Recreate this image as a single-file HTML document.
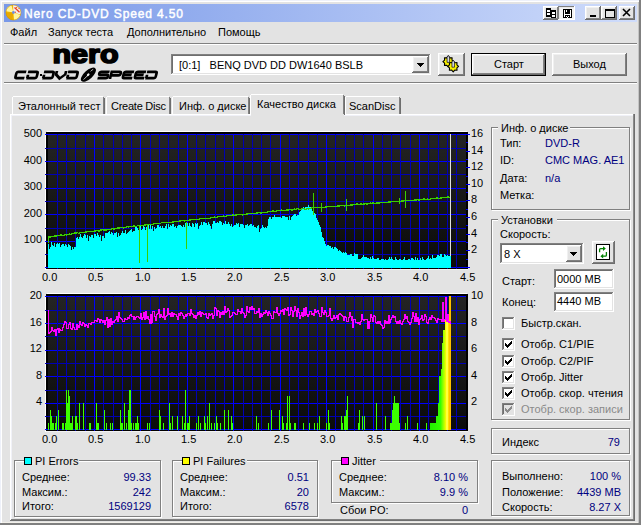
<!DOCTYPE html><html><head><meta charset="utf-8"><style>
*{margin:0;padding:0;box-sizing:border-box}
html,body{width:641px;height:525px;overflow:hidden;background:#e3e3e3;font-family:"Liberation Sans", sans-serif;font-size:11px;color:#000;position:relative}
.t{position:absolute;white-space:pre;line-height:13px}
.a{position:absolute}
</style></head><body><div class="a" style="left:0px;top:0px;width:641px;height:1px;background:#eef1fa;"></div><div class="a" style="left:0px;top:0px;width:1px;height:525px;background:#eef1fa;"></div><div class="a" style="left:1px;top:1px;width:638px;height:1px;background:#ffffff;"></div><div class="a" style="left:1px;top:1px;width:1px;height:522px;background:#ffffff;"></div><div class="a" style="left:0px;top:523px;width:641px;height:2px;background:#808080;"></div><div class="a" style="left:639px;top:0px;width:2px;height:525px;background:#808080;"></div><div class="a" style="left:2px;top:522px;width:637px;height:1px;background:#f2f0ea;"></div><div class="a" style="left:638px;top:2px;width:1px;height:521px;background:#c4c4c4;"></div><div class="a" style="left:4px;top:4px;width:633px;height:18px;background:linear-gradient(to right,#7898e8,#cfdcfb);"></div><div class="t" style="left:24px;top:8px;color:#fff;font-size:12px;font-weight:400;letter-spacing:0.87px;-webkit-text-stroke:0.45px #fff">Nero CD-DVD Speed 4.50</div><svg class="a" style="left:5px;top:4px" width="17" height="17" viewBox="0 0 17 17"><circle cx="8.4" cy="8.5" r="7.5" fill="#f2b800"/><path d="M8.4 8.5 L1.01 7.20 A7.5 7.5 0 0 1 6.46 1.26 Z" fill="#fff6a0"/><path d="M8.4 8.5 L15.45 11.07 A7.5 7.5 0 0 1 9.05 15.97 Z" fill="#fff6a0"/><path d="M8.4 8.5 L7.10 15.89 A7.5 7.5 0 0 1 0.90 8.50 Z" fill="#e8a800"/><path d="M8.4 8.5 L8.14 1.00 A7.5 7.5 0 0 1 15.64 10.44 Z" fill="#f4f0f0"/><path d="M9.5 3.5 L14.5 8.2" stroke="#e84020" stroke-width="1.3"/><circle cx="11.5" cy="3.5" r="0.8" fill="#f06030"/><circle cx="10.3" cy="8.3" r="0.8" fill="#f06030"/><circle cx="14" cy="4.5" r="0.7" fill="#f06030"/><circle cx="8.4" cy="8.5" r="1.4" fill="#7090e0"/><circle cx="8.4" cy="8.5" r="7.5" fill="none" stroke="#c89000" stroke-width="0.5"/></svg><div class="a" style="left:543px;top:6px;width:16px;height:14px;background:#6e6e6e;"></div><div class="a" style="left:543px;top:6px;width:15px;height:13px;background:#ffffff;"></div><div class="a" style="left:544px;top:7px;width:14px;height:12px;background:#808080;"></div><div class="a" style="left:544px;top:7px;width:13px;height:11px;background:#f0f0f0;"></div><div class="a" style="left:545px;top:8px;width:12px;height:10px;background:#e3e3e3;"></div><div class="a" style="left:558px;top:6px;width:17px;height:14px;background:#ffffff;"></div><div class="a" style="left:558px;top:6px;width:16px;height:13px;background:#808080;"></div><div class="a" style="left:559px;top:7px;width:15px;height:12px;background:#e8e8e8;"></div><div class="a" style="left:560px;top:8px;width:14px;height:11px;background:#f4f4f4;"></div><div class="a" style="left:585px;top:6px;width:16px;height:14px;background:#6e6e6e;"></div><div class="a" style="left:585px;top:6px;width:15px;height:13px;background:#ffffff;"></div><div class="a" style="left:586px;top:7px;width:14px;height:12px;background:#808080;"></div><div class="a" style="left:586px;top:7px;width:13px;height:11px;background:#f0f0f0;"></div><div class="a" style="left:587px;top:8px;width:12px;height:10px;background:#e3e3e3;"></div><div class="a" style="left:601px;top:6px;width:16px;height:14px;background:#6e6e6e;"></div><div class="a" style="left:601px;top:6px;width:15px;height:13px;background:#ffffff;"></div><div class="a" style="left:602px;top:7px;width:14px;height:12px;background:#808080;"></div><div class="a" style="left:602px;top:7px;width:13px;height:11px;background:#f0f0f0;"></div><div class="a" style="left:603px;top:8px;width:12px;height:10px;background:#e3e3e3;"></div><div class="a" style="left:619px;top:6px;width:16px;height:14px;background:#6e6e6e;"></div><div class="a" style="left:619px;top:6px;width:15px;height:13px;background:#ffffff;"></div><div class="a" style="left:620px;top:7px;width:14px;height:12px;background:#808080;"></div><div class="a" style="left:620px;top:7px;width:13px;height:11px;background:#f0f0f0;"></div><div class="a" style="left:621px;top:8px;width:12px;height:10px;background:#e3e3e3;"></div><svg class="a" style="left:543px;top:6px" width="92" height="14" shape-rendering="crispEdges">
<rect x="3" y="2" width="5" height="9" fill="#000"/>
<rect x="8" y="4" width="5" height="8" fill="#000"/>
<rect x="4" y="4" width="3" height="2" fill="#fff"/><rect x="4" y="7" width="3" height="2" fill="#fff"/>
<rect x="9" y="6" width="3" height="2" fill="#fff"/><rect x="9" y="9" width="3" height="2" fill="#fff"/>
<rect x="20" y="3" width="9" height="9" fill="#000"/>
<rect x="21" y="4" width="1" height="7" fill="#fff"/><rect x="27" y="4" width="1" height="7" fill="#fff"/>
<rect x="22" y="8" width="5" height="1" fill="#fff"/><rect x="23" y="4" width="1" height="2" fill="#fff"/>
<rect x="23" y="10" width="1" height="1" fill="#fff"/><rect x="25" y="10" width="1" height="1" fill="#fff"/><rect x="24" y="11" width="1" height="1" fill="#fff"/>
<rect x="47" y="9" width="6" height="2" fill="#000"/>
<rect x="62" y="3" width="9" height="8" fill="none" stroke="#000" stroke-width="1"/>
<rect x="62" y="2.5" width="9.5" height="2" fill="#000"/>
<path d="M80 3 L87 10 M87 3 L80 10" stroke="#000" stroke-width="1.6" shape-rendering="auto"/>
</svg><div class="t" style="left:10px;top:26px;color:#000;font-size:11px;font-weight:400;">Файл</div><div class="t" style="left:48px;top:26px;color:#000;font-size:11px;font-weight:400;">Запуск теста</div><div class="t" style="left:127px;top:26px;color:#000;font-size:11px;font-weight:400;">Дополнительно</div><div class="t" style="left:218px;top:26px;color:#000;font-size:11px;font-weight:400;">Помощь</div><div class="a" style="left:4px;top:43px;width:633px;height:1px;background:#808080;"></div><div class="a" style="left:4px;top:44px;width:633px;height:1px;background:#ffffff;"></div><div class="a" style="left:4px;top:82px;width:633px;height:1px;background:#808080;"></div><div class="a" style="left:4px;top:83px;width:633px;height:1px;background:#ffffff;"></div><svg class="a" style="left:0px;top:0px" width="170" height="84"><text transform="translate(52.5 63.3) scale(1 0.92)" x="0" y="0" font-family="Liberation Sans" font-weight="700" font-size="29" textLength="66" lengthAdjust="spacingAndGlyphs" stroke="#000" stroke-width="1.9" stroke-linejoin="round" fill="#000">nero</text><path transform="translate(16 70.7) skewX(-14)" d="M10.5 1.1 H2.6 Q1 1.1 1 2.7 V5.8 Q1 7.4 2.6 7.4 H10.2" fill="none" stroke="#000" stroke-width="2.7"/><path transform="translate(28 70.7) skewX(-14)" d="M0.3 1.1 H8.6 Q10.2 1.1 10.2 2.7 V5.8 Q10.2 7.4 8.6 7.4 H0.3 M1.1 4 V7.4" fill="none" stroke="#000" stroke-width="2.7"/><path transform="translate(44 70.7) skewX(-14)" d="M0.3 1.1 H8.6 Q10.2 1.1 10.2 2.7 V5.8 Q10.2 7.4 8.6 7.4 H0.3 M1.1 4 V7.4" fill="none" stroke="#000" stroke-width="2.7"/><path transform="translate(56 70.7) skewX(-14)" d="M1 0.2 V3.8 L5.6 7.8 L10.2 3.8 V0.2" fill="none" stroke="#000" stroke-width="2.7"/><path transform="translate(68 70.7) skewX(-14)" d="M0.3 1.1 H8.6 Q10.2 1.1 10.2 2.7 V5.8 Q10.2 7.4 8.6 7.4 H0.3 M1.1 4 V7.4" fill="none" stroke="#000" stroke-width="2.7"/><path transform="translate(99 70.7) skewX(-14)" d="M10.8 1.1 H2.6 Q1 1.1 1 2.6 Q1 4.25 2.6 4.25 H8.8 Q10.4 4.25 10.4 5.85 Q10.4 7.4 8.8 7.4 H0.4" fill="none" stroke="#000" stroke-width="2.7"/><path transform="translate(111 70.7) skewX(-14)" d="M1 8.4 V1.1 H8.8 Q10.4 1.1 10.4 2.6 V3 Q10.4 4.6 8.8 4.6 H1.6" fill="none" stroke="#000" stroke-width="2.7"/><path transform="translate(123.5 70.7) skewX(-14)" d="M10.8 1.1 H2.6 Q1 1.1 1 2.7 V5.8 Q1 7.4 2.6 7.4 H10.6 M1.5 4.25 H9.2" fill="none" stroke="#000" stroke-width="2.7"/><path transform="translate(135.5 70.7) skewX(-14)" d="M10.8 1.1 H2.6 Q1 1.1 1 2.7 V5.8 Q1 7.4 2.6 7.4 H10.6 M1.5 4.25 H9.2" fill="none" stroke="#000" stroke-width="2.7"/><path transform="translate(147 70.7) skewX(-14)" d="M0.3 1.1 H8.6 Q10.2 1.1 10.2 2.7 V5.8 Q10.2 7.4 8.6 7.4 H0.3 M1.1 4 V7.4" fill="none" stroke="#000" stroke-width="2.7"/><rect x="40" y="74" width="2" height="2" fill="#000"/><ellipse cx="88.4" cy="74.7" rx="4.3" ry="9.4" transform="rotate(48 88.4 74.7)" fill="#000"/><path d="M83.6 79.6 L87.2 76" stroke="#d8d8d8" stroke-width="0.9"/><path d="M90.6 71.4 Q91.8 69.8 93.2 69.4" fill="none" stroke="#c8c8c8" stroke-width="0.9"/><ellipse cx="88.2" cy="74.8" rx="1.6" ry="1.1" transform="rotate(-45 88.2 74.8)" fill="#f0f0f0"/></svg><div class="a" style="left:171px;top:54px;width:260px;height:21px;background:#ffffff;"></div><div class="a" style="left:171px;top:54px;width:259px;height:20px;background:#808080;"></div><div class="a" style="left:172px;top:55px;width:258px;height:19px;background:#e3e3e3;"></div><div class="a" style="left:172px;top:55px;width:257px;height:18px;background:#6e6e6e;"></div><div class="a" style="left:173px;top:56px;width:256px;height:17px;background:#fff;"></div><div class="t" style="left:179px;top:59px;color:#000;font-size:11px;font-weight:400;">[0:1]   BENQ DVD DD DW1640 BSLB</div><div class="a" style="left:412px;top:56px;width:17px;height:17px;background:#6e6e6e;"></div><div class="a" style="left:412px;top:56px;width:16px;height:16px;background:#ffffff;"></div><div class="a" style="left:413px;top:57px;width:15px;height:15px;background:#808080;"></div><div class="a" style="left:413px;top:57px;width:14px;height:14px;background:#f0f0f0;"></div><div class="a" style="left:414px;top:58px;width:13px;height:13px;background:#e3e3e3;"></div><svg class="a" style="left:412px;top:56px" width="17" height="17" shape-rendering="crispEdges"><path d="M5 7h7l-3.5 4z" fill="#000"/></svg><div class="a" style="left:438px;top:53px;width:27px;height:23px;background:#6e6e6e;"></div><div class="a" style="left:438px;top:53px;width:26px;height:22px;background:#ffffff;"></div><div class="a" style="left:439px;top:54px;width:25px;height:21px;background:#808080;"></div><div class="a" style="left:439px;top:54px;width:24px;height:20px;background:#f0f0f0;"></div><div class="a" style="left:440px;top:55px;width:23px;height:19px;background:#e3e3e3;"></div><svg class="a" style="left:438px;top:53px" width="27" height="23"><polygon points="15.70,8.60 14.00,10.13 14.12,12.42 11.83,12.30 10.30,14.00 8.77,12.30 6.48,12.42 6.60,10.13 4.90,8.60 6.60,7.07 6.48,4.78 8.77,4.90 10.30,3.20 11.83,4.90 14.12,4.78 14.00,7.07" fill="#f8f000" stroke="#000" stroke-width="1.1" stroke-linejoin="round"/><circle cx="10.3" cy="8.6" r="2.2" fill="#f8f000"/><polygon points="20.60,13.40 18.90,14.93 19.02,17.22 16.73,17.10 15.20,18.80 13.67,17.10 11.38,17.22 11.50,14.93 9.80,13.40 11.50,11.87 11.38,9.58 13.67,9.70 15.20,8.00 16.73,9.70 19.02,9.58 18.90,11.87" fill="#f8f000" stroke="#000" stroke-width="1.1" stroke-linejoin="round"/><circle cx="15.2" cy="13.4" r="2.2" fill="#f8f000"/><path d="M9.0 9.4 V4.0 L10.3 2.3999999999999995 L11.600000000000001 4.0 V9.4 Z" fill="#a8a8b8" stroke="#000" stroke-width="0.6"/><rect x="9.9" y="4.1" width="0.8" height="4.6" fill="#e8e8f0"/><path d="M13.899999999999999 14.200000000000001 V8.8 L15.2 7.2 L16.5 8.8 V14.200000000000001 Z" fill="#a8a8b8" stroke="#000" stroke-width="0.6"/><rect x="14.799999999999999" y="8.9" width="0.8" height="4.6" fill="#e8e8f0"/></svg><div class="a" style="left:471px;top:53px;width:75px;height:23px;background:#000;"></div><div class="a" style="left:472px;top:54px;width:73px;height:21px;background:#6e6e6e;"></div><div class="a" style="left:472px;top:54px;width:72px;height:20px;background:#ffffff;"></div><div class="a" style="left:473px;top:55px;width:71px;height:19px;background:#808080;"></div><div class="a" style="left:473px;top:55px;width:70px;height:18px;background:#f0f0f0;"></div><div class="a" style="left:474px;top:56px;width:69px;height:17px;background:#e3e3e3;"></div><div class="t" style="left:494px;top:58px;color:#000;font-size:11px;font-weight:400;">Старт</div><div class="a" style="left:552px;top:53px;width:75px;height:23px;background:#6e6e6e;"></div><div class="a" style="left:552px;top:53px;width:74px;height:22px;background:#ffffff;"></div><div class="a" style="left:553px;top:54px;width:73px;height:21px;background:#808080;"></div><div class="a" style="left:553px;top:54px;width:72px;height:20px;background:#f0f0f0;"></div><div class="a" style="left:554px;top:55px;width:71px;height:19px;background:#e3e3e3;"></div><div class="t" style="left:573px;top:58px;color:#000;font-size:11px;font-weight:400;">Выход</div><div class="a" style="left:10px;top:114px;width:625px;height:407px;border-left:1px solid #fff;border-top:1px solid #fff;"></div><div class="a" style="left:11px;top:115px;width:622px;height:1px;background:#f0f1f8;"></div><div class="a" style="left:11px;top:115px;width:1px;height:404px;background:#f0f1f8;"></div><div class="a" style="left:633px;top:114px;width:1px;height:406px;background:#8a8a8a;"></div><div class="a" style="left:634px;top:114px;width:1px;height:407px;background:#6e6e6e;"></div><div class="a" style="left:11px;top:519px;width:623px;height:1px;background:#808080;"></div><div class="a" style="left:10px;top:520px;width:625px;height:1px;background:#6e6e6e;"></div><div class="a" style="left:12px;top:97px;width:1px;height:17px;background:#fff;"></div><div class="a" style="left:13px;top:96px;width:90px;height:1px;background:#fff;"></div><div class="a" style="left:103px;top:97px;width:1px;height:17px;background:#808080;"></div><div class="a" style="left:104px;top:98px;width:1px;height:16px;background:#6e6e6e;"></div><div class="a" style="left:13px;top:97px;width:90px;height:17px;background:#e3e3e3;"></div><div class="t" style="left:18px;top:100px;color:#000;font-size:11px;font-weight:400;">Эталонный тест</div><div class="a" style="left:106px;top:97px;width:1px;height:17px;background:#fff;"></div><div class="a" style="left:107px;top:96px;width:62px;height:1px;background:#fff;"></div><div class="a" style="left:169px;top:97px;width:1px;height:17px;background:#808080;"></div><div class="a" style="left:170px;top:98px;width:1px;height:16px;background:#6e6e6e;"></div><div class="a" style="left:107px;top:97px;width:62px;height:17px;background:#e3e3e3;"></div><div class="t" style="left:111px;top:100px;color:#000;font-size:11px;font-weight:400;"><span style="letter-spacing:-0.25px">Create Disc</span></div><div class="a" style="left:172px;top:97px;width:1px;height:17px;background:#fff;"></div><div class="a" style="left:173px;top:96px;width:75px;height:1px;background:#fff;"></div><div class="a" style="left:248px;top:97px;width:1px;height:17px;background:#808080;"></div><div class="a" style="left:249px;top:98px;width:1px;height:16px;background:#6e6e6e;"></div><div class="a" style="left:173px;top:97px;width:75px;height:17px;background:#e3e3e3;"></div><div class="t" style="left:179px;top:100px;color:#000;font-size:11px;font-weight:400;">Инф. о диске</div><div class="a" style="left:345px;top:97px;width:1px;height:17px;background:#fff;"></div><div class="a" style="left:346px;top:96px;width:53px;height:1px;background:#fff;"></div><div class="a" style="left:399px;top:97px;width:1px;height:17px;background:#808080;"></div><div class="a" style="left:400px;top:98px;width:1px;height:16px;background:#6e6e6e;"></div><div class="a" style="left:346px;top:97px;width:53px;height:17px;background:#e3e3e3;"></div><div class="t" style="left:349px;top:100px;color:#000;font-size:11px;font-weight:400;">ScanDisc</div><div class="a" style="left:250px;top:95px;width:1px;height:20px;background:#fff;"></div><div class="a" style="left:251px;top:94px;width:92px;height:1px;background:#fff;"></div><div class="a" style="left:343px;top:95px;width:1px;height:20px;background:#808080;"></div><div class="a" style="left:344px;top:96px;width:1px;height:19px;background:#6e6e6e;"></div><div class="a" style="left:251px;top:95px;width:92px;height:20px;background:#e3e3e3;"></div><div class="a" style="left:251px;top:114px;width:93px;height:2px;background:#e3e3e3;"></div><div class="t" style="left:257px;top:98px;color:#000;font-size:11px;font-weight:400;">Качество диска</div><svg class="a" width="641" height="525" style="left:0;top:0" shape-rendering="crispEdges"><defs><linearGradient id="cg134" x1="0" y1="0" x2="0" y2="1"><stop offset="0" stop-color="#242424"/><stop offset="1" stop-color="#0a0a0a"/></linearGradient></defs><rect x="47" y="131" width="420" height="1" fill="#ffffff"/><rect x="45" y="135" width="1" height="135" fill="#ffffff"/><rect x="46" y="269" width="422" height="1" fill="#f2f2f2"/><rect x="46" y="132" width="422" height="137" fill="#000"/><rect x="48" y="134" width="418" height="134" fill="url(#cg134)"/><rect x="45" y="134" width="421" height="1" fill="#0000ff"/><rect x="45" y="148" width="421" height="1" fill="#0000b4"/><rect x="45" y="161" width="421" height="1" fill="#0000ff"/><rect x="45" y="174" width="421" height="1" fill="#0000b4"/><rect x="45" y="188" width="421" height="1" fill="#0000ff"/><rect x="45" y="201" width="421" height="1" fill="#0000b4"/><rect x="45" y="214" width="421" height="1" fill="#0000ff"/><rect x="45" y="228" width="421" height="1" fill="#0000b4"/><rect x="45" y="241" width="421" height="1" fill="#0000ff"/><rect x="45" y="254" width="421" height="1" fill="#0000b4"/><rect x="45" y="267" width="421" height="1" fill="#0000ff"/><rect x="57" y="134" width="1" height="135" fill="#0000b4"/><rect x="66" y="134" width="1" height="135" fill="#0000b4"/><rect x="75" y="134" width="1" height="135" fill="#0000b4"/><rect x="85" y="134" width="1" height="135" fill="#0000b4"/><rect x="94" y="134" width="1" height="135" fill="#0000ff"/><rect x="103" y="134" width="1" height="135" fill="#0000b4"/><rect x="113" y="134" width="1" height="135" fill="#0000b4"/><rect x="122" y="134" width="1" height="135" fill="#0000b4"/><rect x="131" y="134" width="1" height="135" fill="#0000b4"/><rect x="140" y="134" width="1" height="135" fill="#0000ff"/><rect x="150" y="134" width="1" height="135" fill="#0000b4"/><rect x="159" y="134" width="1" height="135" fill="#0000b4"/><rect x="168" y="134" width="1" height="135" fill="#0000b4"/><rect x="178" y="134" width="1" height="135" fill="#0000b4"/><rect x="187" y="134" width="1" height="135" fill="#0000ff"/><rect x="196" y="134" width="1" height="135" fill="#0000b4"/><rect x="205" y="134" width="1" height="135" fill="#0000b4"/><rect x="215" y="134" width="1" height="135" fill="#0000b4"/><rect x="224" y="134" width="1" height="135" fill="#0000b4"/><rect x="233" y="134" width="1" height="135" fill="#0000ff"/><rect x="243" y="134" width="1" height="135" fill="#0000b4"/><rect x="252" y="134" width="1" height="135" fill="#0000b4"/><rect x="261" y="134" width="1" height="135" fill="#0000b4"/><rect x="270" y="134" width="1" height="135" fill="#0000b4"/><rect x="280" y="134" width="1" height="135" fill="#0000ff"/><rect x="289" y="134" width="1" height="135" fill="#0000b4"/><rect x="298" y="134" width="1" height="135" fill="#0000b4"/><rect x="308" y="134" width="1" height="135" fill="#0000b4"/><rect x="317" y="134" width="1" height="135" fill="#0000b4"/><rect x="326" y="134" width="1" height="135" fill="#0000ff"/><rect x="335" y="134" width="1" height="135" fill="#0000b4"/><rect x="345" y="134" width="1" height="135" fill="#0000b4"/><rect x="354" y="134" width="1" height="135" fill="#0000b4"/><rect x="363" y="134" width="1" height="135" fill="#0000b4"/><rect x="373" y="134" width="1" height="135" fill="#0000ff"/><rect x="382" y="134" width="1" height="135" fill="#0000b4"/><rect x="391" y="134" width="1" height="135" fill="#0000b4"/><rect x="400" y="134" width="1" height="135" fill="#0000b4"/><rect x="410" y="134" width="1" height="135" fill="#0000b4"/><rect x="419" y="134" width="1" height="135" fill="#0000ff"/><rect x="428" y="134" width="1" height="135" fill="#0000b4"/><rect x="438" y="134" width="1" height="135" fill="#0000b4"/><rect x="447" y="134" width="1" height="135" fill="#0000b4"/><rect x="456" y="134" width="1" height="135" fill="#0000b4"/><rect x="450" y="134" width="1" height="134" fill="#e0e0e0"/><path d="M48 268 L48 244 L49 244 L49 249 L50 249 L50 247 L51 247 L51 242 L52 242 L52 245 L53 245 L53 246 L54 246 L54 243 L55 243 L55 247 L56 247 L56 244 L57 244 L57 243 L58 243 L58 244 L59 244 L59 243 L60 243 L60 247 L61 247 L61 245 L62 245 L62 244 L63 244 L63 244 L64 244 L64 246 L65 246 L65 244 L66 244 L66 245 L67 245 L67 247 L68 247 L68 244 L69 244 L69 245 L70 245 L70 246 L71 246 L71 250 L72 250 L72 247 L73 247 L73 249 L74 249 L74 247 L75 247 L75 247 L76 247 L76 238 L77 238 L77 237 L78 237 L78 239 L79 239 L79 237 L80 237 L80 234 L81 234 L81 237 L82 237 L82 238 L83 238 L83 236 L84 236 L84 234 L85 234 L85 235 L86 235 L86 238 L87 238 L87 235 L88 235 L88 241 L89 241 L89 236 L90 236 L90 237 L91 237 L91 235 L92 235 L92 235 L93 235 L93 238 L94 238 L94 234 L95 234 L95 234 L96 234 L96 236 L97 236 L97 233 L98 233 L98 235 L99 235 L99 237 L100 237 L100 235 L101 235 L101 241 L102 241 L102 236 L103 236 L103 236 L104 236 L104 238 L105 238 L105 233 L106 233 L106 233 L107 233 L107 233 L108 233 L108 232 L109 232 L109 231 L110 231 L110 234 L111 234 L111 232 L112 232 L112 233 L113 233 L113 235 L114 235 L114 233 L115 233 L115 233 L116 233 L116 232 L117 232 L117 237 L118 237 L118 233 L119 233 L119 236 L120 236 L120 235 L121 235 L121 233 L122 233 L122 231 L123 231 L123 233 L124 233 L124 233 L125 233 L125 230 L126 230 L126 234 L127 234 L127 233 L128 233 L128 232 L129 232 L129 231 L130 231 L130 230 L131 230 L131 229 L132 229 L132 232 L133 232 L133 231 L134 231 L134 231 L135 231 L135 227 L136 227 L136 226 L137 226 L137 228 L138 228 L138 230 L139 230 L139 228 L140 228 L140 226 L141 226 L141 230 L142 230 L142 229 L143 229 L143 226 L144 226 L144 227 L145 227 L145 230 L146 230 L146 227 L147 227 L147 228 L148 228 L148 225 L149 225 L149 229 L150 229 L150 225 L151 225 L151 229 L152 229 L152 226 L153 226 L153 231 L154 231 L154 227 L155 227 L155 229 L156 229 L156 228 L157 228 L157 225 L158 225 L158 225 L159 225 L159 227 L160 227 L160 226 L161 226 L161 228 L162 228 L162 226 L163 226 L163 228 L164 228 L164 228 L165 228 L165 226 L166 226 L166 224 L167 224 L167 229 L168 229 L168 224 L169 224 L169 227 L170 227 L170 225 L171 225 L171 226 L172 226 L172 224 L173 224 L173 224 L174 224 L174 227 L175 227 L175 226 L176 226 L176 228 L177 228 L177 226 L178 226 L178 225 L179 225 L179 225 L180 225 L180 225 L181 225 L181 226 L182 226 L182 227 L183 227 L183 225 L184 225 L184 227 L185 227 L185 223 L186 223 L186 223 L187 223 L187 223 L188 223 L188 226 L189 226 L189 223 L190 223 L190 226 L191 226 L191 227 L192 227 L192 223 L193 223 L193 224 L194 224 L194 227 L195 227 L195 223 L196 223 L196 224 L197 224 L197 223 L198 223 L198 229 L199 229 L199 226 L200 226 L200 225 L201 225 L201 222 L202 222 L202 225 L203 225 L203 222 L204 222 L204 222 L205 222 L205 223 L206 223 L206 223 L207 223 L207 225 L208 225 L208 222 L209 222 L209 224 L210 224 L210 226 L211 226 L211 229 L212 229 L212 224 L213 224 L213 221 L214 221 L214 221 L215 221 L215 223 L216 223 L216 223 L217 223 L217 222 L218 222 L218 223 L219 223 L219 221 L220 221 L220 221 L221 221 L221 222 L222 222 L222 225 L223 225 L223 223 L224 223 L224 224 L225 224 L225 221 L226 221 L226 224 L227 224 L227 224 L228 224 L228 222 L229 222 L229 224 L230 224 L230 226 L231 226 L231 224 L232 224 L232 227 L233 227 L233 226 L234 226 L234 225 L235 225 L235 225 L236 225 L236 223 L237 223 L237 224 L238 224 L238 223 L239 223 L239 227 L240 227 L240 224 L241 224 L241 224 L242 224 L242 224 L243 224 L243 225 L244 225 L244 228 L245 228 L245 225 L246 225 L246 225 L247 225 L247 224 L248 224 L248 226 L249 226 L249 225 L250 225 L250 224 L251 224 L251 224 L252 224 L252 226 L253 226 L253 225 L254 225 L254 227 L255 227 L255 227 L256 227 L256 228 L257 228 L257 226 L258 226 L258 225 L259 225 L259 232 L260 232 L260 229 L261 229 L261 228 L262 228 L262 225 L263 225 L263 227 L264 227 L264 228 L265 228 L265 227 L266 227 L266 228 L267 228 L267 226 L268 226 L268 219 L269 219 L269 217 L270 217 L270 217 L271 217 L271 219 L272 219 L272 217 L273 217 L273 217 L274 217 L274 215 L275 215 L275 217 L276 217 L276 217 L277 217 L277 217 L278 217 L278 217 L279 217 L279 217 L280 217 L280 217 L281 217 L281 218 L282 218 L282 216 L283 216 L283 216 L284 216 L284 216 L285 216 L285 217 L286 217 L286 217 L287 217 L287 217 L288 217 L288 220 L289 220 L289 216 L290 216 L290 220 L291 220 L291 217 L292 217 L292 216 L293 216 L293 215 L294 215 L294 214 L295 214 L295 214 L296 214 L296 216 L297 216 L297 215 L298 215 L298 215 L299 215 L299 212 L300 212 L300 211 L301 211 L301 210 L302 210 L302 208 L303 208 L303 207 L304 207 L304 210 L305 210 L305 207 L306 207 L306 207 L307 207 L307 207 L308 207 L308 205 L309 205 L309 207 L310 207 L310 207 L311 207 L311 208 L312 208 L312 211 L313 211 L313 213 L314 213 L314 213 L315 213 L315 214 L316 214 L316 218 L317 218 L317 220 L318 220 L318 222 L319 222 L319 225 L320 225 L320 227 L321 227 L321 232 L322 232 L322 237 L323 237 L323 238 L324 238 L324 241 L325 241 L325 244 L326 244 L326 246 L327 246 L327 245 L328 245 L328 245 L329 245 L329 246 L330 246 L330 246 L331 246 L331 248 L332 248 L332 247 L333 247 L333 249 L334 249 L334 247 L335 247 L335 247 L336 247 L336 248 L337 248 L337 249 L338 249 L338 251 L339 251 L339 250 L340 250 L340 251 L341 251 L341 252 L342 252 L342 253 L343 253 L343 252 L344 252 L344 253 L345 253 L345 252 L346 252 L346 253 L347 253 L347 255 L348 255 L348 255 L349 255 L349 255 L350 255 L350 254 L351 254 L351 254 L352 254 L352 256 L353 256 L353 256 L354 256 L354 253 L355 253 L355 254 L356 254 L356 254 L357 254 L357 254 L358 254 L358 259 L359 259 L359 259 L360 259 L360 259 L361 259 L361 258 L362 258 L362 257 L363 257 L363 255 L364 255 L364 257 L365 257 L365 257 L366 257 L366 257 L367 257 L367 258 L368 258 L368 258 L369 258 L369 259 L370 259 L370 257 L371 257 L371 259 L372 259 L372 256 L373 256 L373 258 L374 258 L374 259 L375 259 L375 259 L376 259 L376 259 L377 259 L377 258 L378 258 L378 258 L379 258 L379 260 L380 260 L380 260 L381 260 L381 259 L382 259 L382 259 L383 259 L383 259 L384 259 L384 260 L385 260 L385 259 L386 259 L386 260 L387 260 L387 260 L388 260 L388 259 L389 259 L389 257 L390 257 L390 259 L391 259 L391 257 L392 257 L392 259 L393 259 L393 260 L394 260 L394 260 L395 260 L395 257 L396 257 L396 259 L397 259 L397 260 L398 260 L398 260 L399 260 L399 259 L400 259 L400 259 L401 259 L401 260 L402 260 L402 260 L403 260 L403 259 L404 259 L404 257 L405 257 L405 260 L406 260 L406 260 L407 260 L407 260 L408 260 L408 259 L409 259 L409 259 L410 259 L410 260 L411 260 L411 258 L412 258 L412 258 L413 258 L413 259 L414 259 L414 260 L415 260 L415 257 L416 257 L416 260 L417 260 L417 258 L418 258 L418 260 L419 260 L419 260 L420 260 L420 258 L421 258 L421 260 L422 260 L422 257 L423 257 L423 259 L424 259 L424 260 L425 260 L425 260 L426 260 L426 259 L427 259 L427 258 L428 258 L428 256 L429 256 L429 259 L430 259 L430 258 L431 258 L431 259 L432 259 L432 255 L433 255 L433 258 L434 258 L434 258 L435 258 L435 258 L436 258 L436 257 L437 257 L437 255 L438 255 L438 255 L439 255 L439 256 L440 256 L440 254 L441 254 L441 254 L442 254 L442 257 L443 257 L443 257 L444 257 L444 254 L445 254 L445 255 L446 255 L446 256 L447 256 L447 255 L448 255 L448 256 L449 256 L449 256 L450 256 L450 256 L451 256 L451 268 Z" fill="#00ffff"/><path d="M48 237.3 L49 237.2 L50 237.0 L51 236.9 L52 236.7 L53 236.6 L54 236.4 L55 235.7 L56 236.1 L57 236.0 L58 235.2 L59 235.7 L60 235.5 L61 234.8 L62 235.2 L63 235.1 L64 235.5 L65 234.8 L66 234.6 L67 235.1 L68 234.3 L69 234.2 L70 234.0 L71 234.5 L72 233.7 L73 233.0 L74 233.5 L75 232.8 L76 233.2 L77 232.5 L78 233.0 L79 233.5 L80 232.8 L81 232.6 L82 232.5 L83 232.4 L84 232.3 L85 232.2 L86 232.0 L87 231.9 L88 231.8 L89 231.7 L90 231.6 L91 231.4 L92 231.3 L93 231.2 L94 231.1 L95 231.0 L96 230.8 L97 230.7 L98 230.6 L99 231.1 L100 231.0 L101 229.7 L102 230.1 L103 229.4 L104 230.5 L105 229.8 L106 230.3 L107 229.5 L108 229.4 L109 229.3 L110 229.2 L111 229.1 L112 228.9 L113 228.8 L114 229.3 L115 228.6 L116 228.5 L117 228.3 L118 227.6 L119 228.1 L120 228.0 L121 227.3 L122 227.7 L123 227.6 L124 228.1 L125 227.4 L126 227.3 L127 226.5 L128 227.0 L129 226.9 L130 226.8 L131 226.7 L132 226.5 L133 226.4 L134 225.7 L135 226.8 L136 226.7 L137 225.9 L138 225.8 L139 225.7 L140 225.0 L141 226.1 L142 225.3 L143 225.2 L144 225.1 L145 225.0 L146 224.9 L147 224.8 L148 224.6 L149 224.5 L150 224.4 L151 224.3 L152 224.8 L153 224.0 L154 223.9 L155 223.8 L156 223.7 L157 223.6 L158 223.4 L159 223.3 L160 223.2 L161 223.1 L162 222.4 L163 222.8 L164 222.7 L165 222.6 L166 222.5 L167 223.0 L168 222.3 L169 222.2 L170 222.1 L171 222.6 L172 221.9 L173 222.4 L174 221.7 L175 221.6 L176 221.5 L177 221.3 L178 221.2 L179 221.1 L180 221.0 L181 220.9 L182 220.8 L183 220.7 L184 220.6 L185 221.1 L186 220.4 L187 220.3 L188 220.2 L189 220.1 L190 220.0 L191 219.9 L192 219.8 L193 219.7 L194 219.6 L195 219.5 L196 219.4 L197 219.3 L198 219.2 L199 219.1 L200 218.9 L201 218.8 L202 218.1 L203 218.6 L204 218.5 L205 218.4 L206 218.3 L207 218.2 L208 218.1 L209 218.6 L210 218.5 L211 217.8 L212 217.1 L213 217.6 L214 216.9 L215 217.4 L216 217.3 L217 217.2 L218 216.5 L219 217.0 L220 216.3 L221 216.8 L222 216.7 L223 215.9 L224 216.4 L225 216.3 L226 216.2 L227 215.5 L228 215.4 L229 215.9 L230 215.8 L231 215.7 L232 215.0 L233 214.9 L234 215.4 L235 215.3 L236 214.6 L237 215.1 L238 214.4 L239 214.9 L240 214.8 L241 214.1 L242 214.6 L243 215.1 L244 214.4 L245 214.3 L246 214.1 L247 214.0 L248 213.9 L249 213.2 L250 213.7 L251 213.6 L252 213.5 L253 213.4 L254 213.3 L255 213.2 L256 213.1 L257 213.0 L258 212.9 L259 212.8 L260 212.1 L261 213.2 L262 212.5 L263 212.4 L264 212.3 L265 212.2 L266 212.7 L267 212.0 L268 211.9 L269 211.1 L270 211.6 L271 211.5 L272 211.4 L273 210.7 L274 211.2 L275 211.7 L276 211.0 L277 210.9 L278 210.8 L279 210.1 L280 210.6 L281 209.9 L282 210.4 L283 210.4 L284 210.3 L285 210.2 L286 210.1 L287 210.0 L288 210.0 L289 209.9 L290 209.8 L291 209.1 L292 210.3 L293 209.6 L294 208.9 L295 209.4 L296 209.3 L297 208.7 L298 208.6 L299 209.1 L300 209.6 L301 209.5 L302 208.9 L303 208.8 L304 208.7 L305 209.2 L306 209.2 L307 208.5 L308 209.0 L309 208.9 L310 208.2 L311 208.8 L312 207.5 L313 208.0 L314 207.9 L315 207.8 L316 207.8 L317 207.1 L318 207.6 L319 207.5 L320 208.0 L321 207.4 L322 207.3 L323 207.2 L324 207.1 L325 207.1 L326 207.0 L327 206.9 L328 206.2 L329 206.7 L330 206.7 L331 206.6 L332 206.5 L333 206.4 L334 206.3 L335 206.9 L336 206.2 L337 206.1 L338 206.0 L339 206.0 L340 205.9 L341 205.8 L342 205.7 L343 205.6 L344 205.6 L345 206.1 L346 205.4 L347 205.3 L348 205.8 L349 205.2 L350 205.1 L351 205.0 L352 204.9 L353 204.9 L354 204.8 L355 204.7 L356 204.6 L357 203.9 L358 204.5 L359 204.4 L360 204.3 L361 203.6 L362 204.1 L363 204.1 L364 204.0 L365 203.9 L366 203.8 L367 204.4 L368 203.7 L369 203.6 L370 202.9 L371 203.4 L372 203.4 L373 202.7 L374 203.2 L375 203.1 L376 203.1 L377 203.0 L378 202.9 L379 203.4 L380 202.7 L381 202.7 L382 202.6 L383 202.5 L384 202.4 L385 202.4 L386 202.3 L387 202.2 L388 202.1 L389 202.0 L390 202.0 L391 201.9 L392 201.2 L393 201.1 L394 201.7 L395 201.6 L396 201.5 L397 202.0 L398 201.3 L399 201.3 L400 201.2 L401 201.1 L402 201.0 L403 201.0 L404 200.9 L405 200.8 L406 200.7 L407 200.6 L408 200.0 L409 200.5 L410 200.4 L411 200.3 L412 200.3 L413 200.8 L414 200.1 L415 200.0 L416 199.9 L417 199.9 L418 199.8 L419 200.3 L420 199.6 L421 199.6 L422 199.5 L423 199.4 L424 198.7 L425 199.2 L426 199.2 L427 199.1 L428 199.0 L429 199.5 L430 199.5 L431 198.8 L432 198.7 L433 198.6 L434 198.5 L435 198.5 L436 198.4 L437 197.7 L438 198.2 L439 198.2 L440 198.1 L441 198.0 L442 197.9 L443 197.8 L444 197.8 L445 197.7 L446 197.0 L447 197.5 L448 196.9 L449 197.4 L450 197.3" fill="none" stroke="#3ad000" stroke-width="1.2"/><rect x="48" y="236" width="1" height="7" fill="#3ad000"/><rect x="139" y="226" width="1" height="37" fill="#3ad000"/><rect x="147" y="225" width="1" height="37" fill="#3ad000"/><rect x="186" y="222" width="1" height="27" fill="#3ad000"/><rect x="313" y="193" width="1" height="22" fill="#3ad000"/><rect x="346" y="199" width="1" height="12" fill="#3ad000"/><rect x="405" y="191" width="1" height="17" fill="#3ad000"/><rect x="399" y="198" width="1" height="6" fill="#3ad000"/><rect x="321" y="203" width="1" height="9" fill="#3ad000"/><rect x="466" y="134" width="4" height="1" fill="#0000ff"/><rect x="466" y="142" width="2" height="1" fill="#0000ff"/><rect x="466" y="151" width="4" height="1" fill="#0000ff"/><rect x="466" y="159" width="2" height="1" fill="#0000ff"/><rect x="466" y="167" width="4" height="1" fill="#0000ff"/><rect x="466" y="176" width="2" height="1" fill="#0000ff"/><rect x="466" y="184" width="4" height="1" fill="#0000ff"/><rect x="466" y="192" width="2" height="1" fill="#0000ff"/><rect x="466" y="200" width="4" height="1" fill="#0000ff"/><rect x="466" y="209" width="2" height="1" fill="#0000ff"/><rect x="466" y="217" width="4" height="1" fill="#0000ff"/><rect x="466" y="225" width="2" height="1" fill="#0000ff"/><rect x="466" y="234" width="4" height="1" fill="#0000ff"/><rect x="466" y="242" width="2" height="1" fill="#0000ff"/><rect x="466" y="250" width="4" height="1" fill="#0000ff"/><rect x="466" y="259" width="2" height="1" fill="#0000ff"/><rect x="466" y="267" width="4" height="1" fill="#0000ff"/><defs><linearGradient id="cg296" x1="0" y1="0" x2="0" y2="1"><stop offset="0" stop-color="#242424"/><stop offset="1" stop-color="#0a0a0a"/></linearGradient></defs><rect x="47" y="293" width="420" height="1" fill="#ffffff"/><rect x="45" y="297" width="1" height="135" fill="#ffffff"/><rect x="46" y="431" width="422" height="1" fill="#f2f2f2"/><rect x="46" y="294" width="422" height="137" fill="#000"/><rect x="48" y="296" width="418" height="134" fill="url(#cg296)"/><rect x="45" y="296" width="421" height="1" fill="#0000ff"/><rect x="45" y="310" width="421" height="1" fill="#0000b4"/><rect x="45" y="323" width="421" height="1" fill="#0000ff"/><rect x="45" y="336" width="421" height="1" fill="#0000b4"/><rect x="45" y="350" width="421" height="1" fill="#0000ff"/><rect x="45" y="363" width="421" height="1" fill="#0000b4"/><rect x="45" y="376" width="421" height="1" fill="#0000ff"/><rect x="45" y="390" width="421" height="1" fill="#0000b4"/><rect x="45" y="403" width="421" height="1" fill="#0000ff"/><rect x="45" y="416" width="421" height="1" fill="#0000b4"/><rect x="45" y="429" width="421" height="1" fill="#0000ff"/><rect x="57" y="296" width="1" height="135" fill="#0000b4"/><rect x="66" y="296" width="1" height="135" fill="#0000b4"/><rect x="75" y="296" width="1" height="135" fill="#0000b4"/><rect x="85" y="296" width="1" height="135" fill="#0000b4"/><rect x="94" y="296" width="1" height="135" fill="#0000ff"/><rect x="103" y="296" width="1" height="135" fill="#0000b4"/><rect x="113" y="296" width="1" height="135" fill="#0000b4"/><rect x="122" y="296" width="1" height="135" fill="#0000b4"/><rect x="131" y="296" width="1" height="135" fill="#0000b4"/><rect x="140" y="296" width="1" height="135" fill="#0000ff"/><rect x="150" y="296" width="1" height="135" fill="#0000b4"/><rect x="159" y="296" width="1" height="135" fill="#0000b4"/><rect x="168" y="296" width="1" height="135" fill="#0000b4"/><rect x="178" y="296" width="1" height="135" fill="#0000b4"/><rect x="187" y="296" width="1" height="135" fill="#0000ff"/><rect x="196" y="296" width="1" height="135" fill="#0000b4"/><rect x="205" y="296" width="1" height="135" fill="#0000b4"/><rect x="215" y="296" width="1" height="135" fill="#0000b4"/><rect x="224" y="296" width="1" height="135" fill="#0000b4"/><rect x="233" y="296" width="1" height="135" fill="#0000ff"/><rect x="243" y="296" width="1" height="135" fill="#0000b4"/><rect x="252" y="296" width="1" height="135" fill="#0000b4"/><rect x="261" y="296" width="1" height="135" fill="#0000b4"/><rect x="270" y="296" width="1" height="135" fill="#0000b4"/><rect x="280" y="296" width="1" height="135" fill="#0000ff"/><rect x="289" y="296" width="1" height="135" fill="#0000b4"/><rect x="298" y="296" width="1" height="135" fill="#0000b4"/><rect x="308" y="296" width="1" height="135" fill="#0000b4"/><rect x="317" y="296" width="1" height="135" fill="#0000b4"/><rect x="326" y="296" width="1" height="135" fill="#0000ff"/><rect x="335" y="296" width="1" height="135" fill="#0000b4"/><rect x="345" y="296" width="1" height="135" fill="#0000b4"/><rect x="354" y="296" width="1" height="135" fill="#0000b4"/><rect x="363" y="296" width="1" height="135" fill="#0000b4"/><rect x="373" y="296" width="1" height="135" fill="#0000ff"/><rect x="382" y="296" width="1" height="135" fill="#0000b4"/><rect x="391" y="296" width="1" height="135" fill="#0000b4"/><rect x="400" y="296" width="1" height="135" fill="#0000b4"/><rect x="410" y="296" width="1" height="135" fill="#0000b4"/><rect x="419" y="296" width="1" height="135" fill="#0000ff"/><rect x="428" y="296" width="1" height="135" fill="#0000b4"/><rect x="438" y="296" width="1" height="135" fill="#0000b4"/><rect x="447" y="296" width="1" height="135" fill="#0000b4"/><rect x="456" y="296" width="1" height="135" fill="#0000b4"/><rect x="48" y="423" width="1" height="7" fill="#3cff00"/><rect x="50" y="410" width="1" height="20" fill="#3cff00"/><rect x="51" y="416" width="1" height="14" fill="#3cff00"/><rect x="52" y="423" width="1" height="7" fill="#3cff00"/><rect x="53" y="423" width="1" height="7" fill="#3cff00"/><rect x="55" y="423" width="1" height="7" fill="#3cff00"/><rect x="56" y="416" width="1" height="14" fill="#3cff00"/><rect x="58" y="410" width="1" height="20" fill="#3cff00"/><rect x="62" y="423" width="1" height="7" fill="#3cff00"/><rect x="63" y="423" width="1" height="7" fill="#3cff00"/><rect x="65" y="423" width="1" height="7" fill="#3cff00"/><rect x="66" y="390" width="1" height="40" fill="#3cff00"/><rect x="67" y="403" width="1" height="27" fill="#3cff00"/><rect x="68" y="390" width="1" height="40" fill="#3cff00"/><rect x="69" y="396" width="1" height="34" fill="#3cff00"/><rect x="70" y="423" width="1" height="7" fill="#3cff00"/><rect x="71" y="423" width="1" height="7" fill="#3cff00"/><rect x="72" y="416" width="1" height="14" fill="#3cff00"/><rect x="75" y="416" width="1" height="14" fill="#3cff00"/><rect x="76" y="416" width="1" height="14" fill="#3cff00"/><rect x="77" y="423" width="1" height="7" fill="#3cff00"/><rect x="79" y="403" width="1" height="27" fill="#3cff00"/><rect x="83" y="403" width="1" height="27" fill="#3cff00"/><rect x="89" y="423" width="1" height="7" fill="#3cff00"/><rect x="90" y="423" width="1" height="7" fill="#3cff00"/><rect x="96" y="403" width="1" height="27" fill="#3cff00"/><rect x="97" y="423" width="1" height="7" fill="#3cff00"/><rect x="98" y="423" width="1" height="7" fill="#3cff00"/><rect x="104" y="410" width="1" height="20" fill="#3cff00"/><rect x="106" y="423" width="1" height="7" fill="#3cff00"/><rect x="110" y="423" width="1" height="7" fill="#3cff00"/><rect x="112" y="423" width="1" height="7" fill="#3cff00"/><rect x="120" y="410" width="1" height="20" fill="#3cff00"/><rect x="121" y="423" width="1" height="7" fill="#3cff00"/><rect x="122" y="423" width="1" height="7" fill="#3cff00"/><rect x="124" y="403" width="1" height="27" fill="#3cff00"/><rect x="126" y="423" width="1" height="7" fill="#3cff00"/><rect x="128" y="410" width="1" height="20" fill="#3cff00"/><rect x="129" y="390" width="1" height="40" fill="#3cff00"/><rect x="130" y="390" width="1" height="40" fill="#3cff00"/><rect x="131" y="423" width="1" height="7" fill="#3cff00"/><rect x="133" y="423" width="1" height="7" fill="#3cff00"/><rect x="135" y="423" width="1" height="7" fill="#3cff00"/><rect x="136" y="423" width="1" height="7" fill="#3cff00"/><rect x="137" y="416" width="1" height="14" fill="#3cff00"/><rect x="138" y="423" width="1" height="7" fill="#3cff00"/><rect x="147" y="423" width="1" height="7" fill="#3cff00"/><rect x="149" y="423" width="1" height="7" fill="#3cff00"/><rect x="159" y="410" width="1" height="20" fill="#3cff00"/><rect x="160" y="416" width="1" height="14" fill="#3cff00"/><rect x="163" y="423" width="1" height="7" fill="#3cff00"/><rect x="169" y="403" width="1" height="27" fill="#3cff00"/><rect x="170" y="423" width="1" height="7" fill="#3cff00"/><rect x="172" y="416" width="1" height="14" fill="#3cff00"/><rect x="177" y="416" width="1" height="14" fill="#3cff00"/><rect x="182" y="416" width="1" height="14" fill="#3cff00"/><rect x="184" y="423" width="1" height="7" fill="#3cff00"/><rect x="185" y="390" width="1" height="40" fill="#3cff00"/><rect x="187" y="423" width="1" height="7" fill="#3cff00"/><rect x="188" y="423" width="1" height="7" fill="#3cff00"/><rect x="189" y="416" width="1" height="14" fill="#3cff00"/><rect x="196" y="423" width="1" height="7" fill="#3cff00"/><rect x="198" y="416" width="1" height="14" fill="#3cff00"/><rect x="200" y="423" width="1" height="7" fill="#3cff00"/><rect x="204" y="416" width="1" height="14" fill="#3cff00"/><rect x="205" y="423" width="1" height="7" fill="#3cff00"/><rect x="207" y="416" width="1" height="14" fill="#3cff00"/><rect x="209" y="403" width="1" height="27" fill="#3cff00"/><rect x="211" y="423" width="1" height="7" fill="#3cff00"/><rect x="214" y="423" width="1" height="7" fill="#3cff00"/><rect x="216" y="416" width="1" height="14" fill="#3cff00"/><rect x="217" y="423" width="1" height="7" fill="#3cff00"/><rect x="220" y="423" width="1" height="7" fill="#3cff00"/><rect x="224" y="410" width="1" height="20" fill="#3cff00"/><rect x="228" y="410" width="1" height="20" fill="#3cff00"/><rect x="231" y="416" width="1" height="14" fill="#3cff00"/><rect x="232" y="423" width="1" height="7" fill="#3cff00"/><rect x="256" y="416" width="1" height="14" fill="#3cff00"/><rect x="258" y="423" width="1" height="7" fill="#3cff00"/><rect x="268" y="423" width="1" height="7" fill="#3cff00"/><rect x="271" y="410" width="1" height="20" fill="#3cff00"/><rect x="279" y="410" width="1" height="20" fill="#3cff00"/><rect x="282" y="416" width="1" height="14" fill="#3cff00"/><rect x="283" y="423" width="1" height="7" fill="#3cff00"/><rect x="286" y="423" width="1" height="7" fill="#3cff00"/><rect x="287" y="396" width="1" height="34" fill="#3cff00"/><rect x="289" y="396" width="1" height="34" fill="#3cff00"/><rect x="290" y="423" width="1" height="7" fill="#3cff00"/><rect x="294" y="423" width="1" height="7" fill="#3cff00"/><rect x="295" y="423" width="1" height="7" fill="#3cff00"/><rect x="303" y="423" width="1" height="7" fill="#3cff00"/><rect x="309" y="423" width="1" height="7" fill="#3cff00"/><rect x="314" y="423" width="1" height="7" fill="#3cff00"/><rect x="317" y="423" width="1" height="7" fill="#3cff00"/><rect x="319" y="416" width="1" height="14" fill="#3cff00"/><rect x="326" y="423" width="1" height="7" fill="#3cff00"/><rect x="328" y="410" width="1" height="20" fill="#3cff00"/><rect x="329" y="423" width="1" height="7" fill="#3cff00"/><rect x="341" y="416" width="1" height="14" fill="#3cff00"/><rect x="342" y="423" width="1" height="7" fill="#3cff00"/><rect x="344" y="416" width="1" height="14" fill="#3cff00"/><rect x="345" y="416" width="1" height="14" fill="#3cff00"/><rect x="346" y="410" width="1" height="20" fill="#3cff00"/><rect x="347" y="396" width="1" height="34" fill="#3cff00"/><rect x="358" y="423" width="1" height="7" fill="#3cff00"/><rect x="359" y="410" width="1" height="20" fill="#3cff00"/><rect x="362" y="416" width="1" height="14" fill="#3cff00"/><rect x="364" y="416" width="1" height="14" fill="#3cff00"/><rect x="376" y="403" width="1" height="27" fill="#3cff00"/><rect x="385" y="416" width="1" height="14" fill="#3cff00"/><rect x="390" y="423" width="1" height="7" fill="#3cff00"/><rect x="391" y="423" width="1" height="7" fill="#3cff00"/><rect x="392" y="410" width="1" height="20" fill="#3cff00"/><rect x="393" y="403" width="1" height="27" fill="#3cff00"/><rect x="394" y="396" width="1" height="34" fill="#3cff00"/><rect x="395" y="403" width="1" height="27" fill="#3cff00"/><rect x="396" y="403" width="1" height="27" fill="#3cff00"/><rect x="397" y="403" width="1" height="27" fill="#3cff00"/><rect x="398" y="403" width="1" height="27" fill="#3cff00"/><rect x="399" y="423" width="1" height="7" fill="#3cff00"/><rect x="405" y="423" width="1" height="7" fill="#3cff00"/><rect x="407" y="416" width="1" height="14" fill="#3cff00"/><rect x="417" y="423" width="1" height="7" fill="#3cff00"/><rect x="426" y="423" width="1" height="7" fill="#3cff00"/><defs><linearGradient id="blob" x1="430" y1="0" x2="451" y2="0" gradientUnits="userSpaceOnUse"><stop offset="0" stop-color="#22ee00"/><stop offset="0.5" stop-color="#33ff00"/><stop offset="0.62" stop-color="#90ff00"/><stop offset="0.72" stop-color="#d8ff00"/><stop offset="0.76" stop-color="#ffff00"/><stop offset="0.81" stop-color="#ffff70"/><stop offset="0.86" stop-color="#ffff00"/><stop offset="0.9" stop-color="#ffc000"/><stop offset="0.97" stop-color="#ffb800"/><stop offset="1" stop-color="#ffe000"/></linearGradient></defs><path d="M430 430 L430 423 L436 423 L436 416 L438 416 L438 403 L439 403 L439 376 L441 376 L441 369 L442 369 L442 343 L443 343 L443 330 L445 330 L445 317 L449 317 L449 296 L451 296 L451 430 Z" fill="url(#blob)"/><rect x="48" y="310" width="1" height="24" fill="#ff00ff"/><rect x="49" y="332" width="1" height="2" fill="#ff00ff"/><rect x="50" y="331" width="1" height="2" fill="#ff00ff"/><rect x="51" y="327" width="1" height="5" fill="#ff00ff"/><rect x="52" y="327" width="1" height="4" fill="#ff00ff"/><rect x="53" y="330" width="1" height="2" fill="#ff00ff"/><rect x="54" y="329" width="1" height="3" fill="#ff00ff"/><rect x="55" y="329" width="1" height="7" fill="#ff00ff"/><rect x="56" y="329" width="1" height="7" fill="#ff00ff"/><rect x="57" y="328" width="1" height="2" fill="#ff00ff"/><rect x="58" y="328" width="2" height="5" fill="#ff00ff"/><rect x="59" y="329" width="1" height="4" fill="#ff00ff"/><rect x="60" y="329" width="1" height="2" fill="#ff00ff"/><rect x="61" y="330" width="1" height="1" fill="#ff00ff"/><rect x="62" y="327" width="1" height="4" fill="#ff00ff"/><rect x="63" y="324" width="1" height="4" fill="#ff00ff"/><rect x="64" y="321" width="1" height="4" fill="#ff00ff"/><rect x="65" y="321" width="1" height="2" fill="#ff00ff"/><rect x="66" y="322" width="1" height="7" fill="#ff00ff"/><rect x="67" y="328" width="1" height="1" fill="#ff00ff"/><rect x="68" y="324" width="1" height="5" fill="#ff00ff"/><rect x="69" y="322" width="1" height="3" fill="#ff00ff"/><rect x="70" y="322" width="1" height="7" fill="#ff00ff"/><rect x="71" y="328" width="1" height="2" fill="#ff00ff"/><rect x="72" y="323" width="1" height="7" fill="#ff00ff"/><rect x="73" y="323" width="1" height="5" fill="#ff00ff"/><rect x="74" y="327" width="1" height="3" fill="#ff00ff"/><rect x="75" y="329" width="1" height="1" fill="#ff00ff"/><rect x="76" y="324" width="2" height="6" fill="#ff00ff"/><rect x="77" y="324" width="1" height="2" fill="#ff00ff"/><rect x="78" y="325" width="1" height="3" fill="#ff00ff"/><rect x="79" y="321" width="1" height="7" fill="#ff00ff"/><rect x="80" y="321" width="1" height="4" fill="#ff00ff"/><rect x="81" y="324" width="1" height="2" fill="#ff00ff"/><rect x="82" y="322" width="1" height="4" fill="#ff00ff"/><rect x="83" y="322" width="1" height="2" fill="#ff00ff"/><rect x="84" y="323" width="1" height="4" fill="#ff00ff"/><rect x="85" y="324" width="1" height="3" fill="#ff00ff"/><rect x="86" y="324" width="1" height="2" fill="#ff00ff"/><rect x="87" y="325" width="1" height="3" fill="#ff00ff"/><rect x="88" y="323" width="1" height="5" fill="#ff00ff"/><rect x="89" y="323" width="1" height="1" fill="#ff00ff"/><rect x="90" y="323" width="1" height="2" fill="#ff00ff"/><rect x="91" y="322" width="1" height="3" fill="#ff00ff"/><rect x="92" y="322" width="1" height="1" fill="#ff00ff"/><rect x="93" y="322" width="1" height="1" fill="#ff00ff"/><rect x="94" y="320" width="1" height="3" fill="#ff00ff"/><rect x="95" y="320" width="1" height="1" fill="#ff00ff"/><rect x="96" y="320" width="1" height="2" fill="#ff00ff"/><rect x="97" y="318" width="1" height="4" fill="#ff00ff"/><rect x="98" y="318" width="1" height="2" fill="#ff00ff"/><rect x="99" y="319" width="1" height="4" fill="#ff00ff"/><rect x="100" y="319" width="1" height="4" fill="#ff00ff"/><rect x="101" y="319" width="1" height="2" fill="#ff00ff"/><rect x="102" y="320" width="1" height="3" fill="#ff00ff"/><rect x="103" y="320" width="1" height="3" fill="#ff00ff"/><rect x="104" y="320" width="1" height="5" fill="#ff00ff"/><rect x="105" y="320" width="1" height="5" fill="#ff00ff"/><rect x="106" y="317" width="1" height="4" fill="#ff00ff"/><rect x="107" y="317" width="1" height="11" fill="#ff00ff"/><rect x="108" y="319" width="1" height="9" fill="#ff00ff"/><rect x="109" y="319" width="1" height="8" fill="#ff00ff"/><rect x="110" y="318" width="1" height="9" fill="#ff00ff"/><rect x="111" y="318" width="1" height="7" fill="#ff00ff"/><rect x="112" y="321" width="1" height="4" fill="#ff00ff"/><rect x="113" y="321" width="2" height="2" fill="#ff00ff"/><rect x="114" y="320" width="1" height="3" fill="#ff00ff"/><rect x="115" y="319" width="1" height="2" fill="#ff00ff"/><rect x="116" y="316" width="1" height="4" fill="#ff00ff"/><rect x="117" y="316" width="1" height="6" fill="#ff00ff"/><rect x="118" y="312" width="1" height="10" fill="#ff00ff"/><rect x="119" y="312" width="1" height="6" fill="#ff00ff"/><rect x="120" y="317" width="1" height="2" fill="#ff00ff"/><rect x="121" y="318" width="1" height="2" fill="#ff00ff"/><rect x="122" y="319" width="1" height="3" fill="#ff00ff"/><rect x="123" y="321" width="1" height="1" fill="#ff00ff"/><rect x="124" y="318" width="1" height="4" fill="#ff00ff"/><rect x="125" y="318" width="1" height="2" fill="#ff00ff"/><rect x="126" y="319" width="1" height="1" fill="#ff00ff"/><rect x="127" y="317" width="1" height="3" fill="#ff00ff"/><rect x="128" y="317" width="1" height="2" fill="#ff00ff"/><rect x="129" y="315" width="1" height="4" fill="#ff00ff"/><rect x="130" y="314" width="1" height="2" fill="#ff00ff"/><rect x="131" y="314" width="1" height="3" fill="#ff00ff"/><rect x="132" y="316" width="1" height="1" fill="#ff00ff"/><rect x="133" y="316" width="2" height="4" fill="#ff00ff"/><rect x="134" y="319" width="1" height="1" fill="#ff00ff"/><rect x="135" y="317" width="1" height="3" fill="#ff00ff"/><rect x="136" y="316" width="1" height="2" fill="#ff00ff"/><rect x="137" y="316" width="1" height="1" fill="#ff00ff"/><rect x="138" y="316" width="1" height="2" fill="#ff00ff"/><rect x="139" y="317" width="1" height="2" fill="#ff00ff"/><rect x="140" y="313" width="1" height="6" fill="#ff00ff"/><rect x="141" y="313" width="1" height="7" fill="#ff00ff"/><rect x="142" y="317" width="1" height="3" fill="#ff00ff"/><rect x="143" y="312" width="1" height="6" fill="#ff00ff"/><rect x="144" y="312" width="1" height="8" fill="#ff00ff"/><rect x="145" y="311" width="1" height="9" fill="#ff00ff"/><rect x="146" y="311" width="1" height="8" fill="#ff00ff"/><rect x="147" y="316" width="1" height="3" fill="#ff00ff"/><rect x="148" y="316" width="1" height="4" fill="#ff00ff"/><rect x="149" y="319" width="1" height="5" fill="#ff00ff"/><rect x="150" y="314" width="2" height="10" fill="#ff00ff"/><rect x="151" y="314" width="1" height="9" fill="#ff00ff"/><rect x="152" y="311" width="1" height="12" fill="#ff00ff"/><rect x="153" y="311" width="1" height="1" fill="#ff00ff"/><rect x="154" y="311" width="1" height="6" fill="#ff00ff"/><rect x="155" y="316" width="1" height="5" fill="#ff00ff"/><rect x="156" y="314" width="1" height="7" fill="#ff00ff"/><rect x="157" y="313" width="1" height="2" fill="#ff00ff"/><rect x="158" y="309" width="1" height="5" fill="#ff00ff"/><rect x="159" y="309" width="1" height="9" fill="#ff00ff"/><rect x="160" y="314" width="1" height="4" fill="#ff00ff"/><rect x="161" y="314" width="1" height="3" fill="#ff00ff"/><rect x="162" y="316" width="1" height="2" fill="#ff00ff"/><rect x="163" y="308" width="1" height="10" fill="#ff00ff"/><rect x="164" y="308" width="1" height="12" fill="#ff00ff"/><rect x="165" y="316" width="1" height="4" fill="#ff00ff"/><rect x="166" y="315" width="1" height="2" fill="#ff00ff"/><rect x="167" y="308" width="1" height="8" fill="#ff00ff"/><rect x="168" y="308" width="1" height="7" fill="#ff00ff"/><rect x="169" y="313" width="1" height="2" fill="#ff00ff"/><rect x="170" y="313" width="1" height="4" fill="#ff00ff"/><rect x="171" y="312" width="1" height="5" fill="#ff00ff"/><rect x="172" y="312" width="1" height="5" fill="#ff00ff"/><rect x="173" y="313" width="1" height="4" fill="#ff00ff"/><rect x="174" y="313" width="1" height="2" fill="#ff00ff"/><rect x="175" y="314" width="1" height="1" fill="#ff00ff"/><rect x="176" y="314" width="1" height="3" fill="#ff00ff"/><rect x="177" y="316" width="1" height="4" fill="#ff00ff"/><rect x="178" y="313" width="1" height="7" fill="#ff00ff"/><rect x="179" y="313" width="1" height="3" fill="#ff00ff"/><rect x="180" y="312" width="1" height="4" fill="#ff00ff"/><rect x="181" y="312" width="1" height="2" fill="#ff00ff"/><rect x="182" y="313" width="1" height="3" fill="#ff00ff"/><rect x="183" y="315" width="1" height="4" fill="#ff00ff"/><rect x="184" y="316" width="1" height="3" fill="#ff00ff"/><rect x="185" y="314" width="2" height="3" fill="#ff00ff"/><rect x="186" y="314" width="1" height="2" fill="#ff00ff"/><rect x="187" y="313" width="1" height="3" fill="#ff00ff"/><rect x="188" y="313" width="1" height="1" fill="#ff00ff"/><rect x="189" y="313" width="1" height="3" fill="#ff00ff"/><rect x="190" y="309" width="1" height="7" fill="#ff00ff"/><rect x="191" y="309" width="1" height="5" fill="#ff00ff"/><rect x="192" y="313" width="1" height="2" fill="#ff00ff"/><rect x="193" y="314" width="1" height="4" fill="#ff00ff"/><rect x="194" y="315" width="1" height="3" fill="#ff00ff"/><rect x="195" y="315" width="1" height="4" fill="#ff00ff"/><rect x="196" y="315" width="1" height="4" fill="#ff00ff"/><rect x="197" y="312" width="1" height="4" fill="#ff00ff"/><rect x="198" y="312" width="1" height="3" fill="#ff00ff"/><rect x="199" y="311" width="1" height="4" fill="#ff00ff"/><rect x="200" y="311" width="1" height="6" fill="#ff00ff"/><rect x="201" y="312" width="1" height="5" fill="#ff00ff"/><rect x="202" y="312" width="1" height="2" fill="#ff00ff"/><rect x="203" y="313" width="1" height="2" fill="#ff00ff"/><rect x="204" y="314" width="1" height="1" fill="#ff00ff"/><rect x="205" y="313" width="1" height="2" fill="#ff00ff"/><rect x="206" y="313" width="1" height="5" fill="#ff00ff"/><rect x="207" y="317" width="1" height="2" fill="#ff00ff"/><rect x="208" y="313" width="1" height="6" fill="#ff00ff"/><rect x="209" y="313" width="1" height="3" fill="#ff00ff"/><rect x="210" y="314" width="1" height="2" fill="#ff00ff"/><rect x="211" y="313" width="1" height="2" fill="#ff00ff"/><rect x="212" y="313" width="1" height="6" fill="#ff00ff"/><rect x="213" y="315" width="1" height="4" fill="#ff00ff"/><rect x="214" y="307" width="1" height="9" fill="#ff00ff"/><rect x="215" y="307" width="1" height="2" fill="#ff00ff"/><rect x="216" y="308" width="1" height="8" fill="#ff00ff"/><rect x="217" y="310" width="1" height="6" fill="#ff00ff"/><rect x="218" y="310" width="1" height="2" fill="#ff00ff"/><rect x="219" y="311" width="1" height="7" fill="#ff00ff"/><rect x="220" y="312" width="1" height="6" fill="#ff00ff"/><rect x="221" y="312" width="1" height="3" fill="#ff00ff"/><rect x="222" y="311" width="1" height="4" fill="#ff00ff"/><rect x="223" y="311" width="1" height="4" fill="#ff00ff"/><rect x="224" y="306" width="1" height="9" fill="#ff00ff"/><rect x="225" y="306" width="1" height="7" fill="#ff00ff"/><rect x="226" y="311" width="1" height="2" fill="#ff00ff"/><rect x="227" y="308" width="1" height="4" fill="#ff00ff"/><rect x="228" y="308" width="1" height="3" fill="#ff00ff"/><rect x="229" y="310" width="1" height="8" fill="#ff00ff"/><rect x="230" y="316" width="1" height="2" fill="#ff00ff"/><rect x="231" y="315" width="1" height="2" fill="#ff00ff"/><rect x="232" y="312" width="1" height="4" fill="#ff00ff"/><rect x="233" y="312" width="1" height="1" fill="#ff00ff"/><rect x="234" y="312" width="1" height="2" fill="#ff00ff"/><rect x="235" y="313" width="1" height="2" fill="#ff00ff"/><rect x="236" y="314" width="1" height="1" fill="#ff00ff"/><rect x="237" y="309" width="1" height="6" fill="#ff00ff"/><rect x="238" y="309" width="1" height="3" fill="#ff00ff"/><rect x="239" y="311" width="1" height="1" fill="#ff00ff"/><rect x="240" y="311" width="1" height="3" fill="#ff00ff"/><rect x="241" y="308" width="1" height="6" fill="#ff00ff"/><rect x="242" y="308" width="1" height="5" fill="#ff00ff"/><rect x="243" y="312" width="1" height="2" fill="#ff00ff"/><rect x="244" y="313" width="1" height="5" fill="#ff00ff"/><rect x="245" y="315" width="1" height="3" fill="#ff00ff"/><rect x="246" y="306" width="1" height="10" fill="#ff00ff"/><rect x="247" y="306" width="1" height="6" fill="#ff00ff"/><rect x="248" y="311" width="1" height="2" fill="#ff00ff"/><rect x="249" y="307" width="1" height="6" fill="#ff00ff"/><rect x="250" y="307" width="1" height="3" fill="#ff00ff"/><rect x="251" y="306" width="1" height="4" fill="#ff00ff"/><rect x="252" y="306" width="1" height="4" fill="#ff00ff"/><rect x="253" y="308" width="1" height="2" fill="#ff00ff"/><rect x="254" y="308" width="1" height="6" fill="#ff00ff"/><rect x="255" y="313" width="1" height="1" fill="#ff00ff"/><rect x="256" y="311" width="1" height="3" fill="#ff00ff"/><rect x="257" y="311" width="1" height="2" fill="#ff00ff"/><rect x="258" y="308" width="2" height="5" fill="#ff00ff"/><rect x="259" y="308" width="1" height="10" fill="#ff00ff"/><rect x="260" y="313" width="1" height="5" fill="#ff00ff"/><rect x="261" y="313" width="1" height="4" fill="#ff00ff"/><rect x="262" y="314" width="1" height="3" fill="#ff00ff"/><rect x="263" y="312" width="1" height="3" fill="#ff00ff"/><rect x="264" y="312" width="1" height="2" fill="#ff00ff"/><rect x="265" y="310" width="1" height="4" fill="#ff00ff"/><rect x="266" y="310" width="1" height="3" fill="#ff00ff"/><rect x="267" y="312" width="1" height="4" fill="#ff00ff"/><rect x="268" y="311" width="1" height="5" fill="#ff00ff"/><rect x="269" y="311" width="1" height="3" fill="#ff00ff"/><rect x="270" y="313" width="1" height="3" fill="#ff00ff"/><rect x="271" y="315" width="1" height="4" fill="#ff00ff"/><rect x="272" y="318" width="1" height="1" fill="#ff00ff"/><rect x="273" y="311" width="1" height="8" fill="#ff00ff"/><rect x="274" y="311" width="1" height="2" fill="#ff00ff"/><rect x="275" y="312" width="1" height="1" fill="#ff00ff"/><rect x="276" y="307" width="1" height="6" fill="#ff00ff"/><rect x="277" y="307" width="1" height="7" fill="#ff00ff"/><rect x="278" y="313" width="1" height="3" fill="#ff00ff"/><rect x="279" y="313" width="1" height="3" fill="#ff00ff"/><rect x="280" y="310" width="1" height="4" fill="#ff00ff"/><rect x="281" y="310" width="1" height="2" fill="#ff00ff"/><rect x="282" y="309" width="1" height="3" fill="#ff00ff"/><rect x="283" y="309" width="2" height="6" fill="#ff00ff"/><rect x="284" y="308" width="1" height="7" fill="#ff00ff"/><rect x="285" y="308" width="1" height="2" fill="#ff00ff"/><rect x="286" y="309" width="1" height="2" fill="#ff00ff"/><rect x="287" y="307" width="1" height="4" fill="#ff00ff"/><rect x="288" y="307" width="1" height="9" fill="#ff00ff"/><rect x="289" y="314" width="1" height="2" fill="#ff00ff"/><rect x="290" y="307" width="1" height="8" fill="#ff00ff"/><rect x="291" y="307" width="1" height="4" fill="#ff00ff"/><rect x="292" y="310" width="1" height="7" fill="#ff00ff"/><rect x="293" y="311" width="1" height="6" fill="#ff00ff"/><rect x="294" y="306" width="1" height="6" fill="#ff00ff"/><rect x="295" y="306" width="1" height="5" fill="#ff00ff"/><rect x="296" y="310" width="1" height="7" fill="#ff00ff"/><rect x="297" y="308" width="1" height="9" fill="#ff00ff"/><rect x="298" y="308" width="1" height="5" fill="#ff00ff"/><rect x="299" y="312" width="1" height="7" fill="#ff00ff"/><rect x="300" y="315" width="1" height="4" fill="#ff00ff"/><rect x="301" y="312" width="1" height="4" fill="#ff00ff"/><rect x="302" y="312" width="1" height="5" fill="#ff00ff"/><rect x="303" y="308" width="1" height="9" fill="#ff00ff"/><rect x="304" y="308" width="1" height="8" fill="#ff00ff"/><rect x="305" y="307" width="1" height="9" fill="#ff00ff"/><rect x="306" y="307" width="1" height="8" fill="#ff00ff"/><rect x="307" y="314" width="1" height="3" fill="#ff00ff"/><rect x="308" y="314" width="1" height="3" fill="#ff00ff"/><rect x="309" y="311" width="1" height="4" fill="#ff00ff"/><rect x="310" y="311" width="1" height="1" fill="#ff00ff"/><rect x="311" y="311" width="1" height="4" fill="#ff00ff"/><rect x="312" y="313" width="1" height="2" fill="#ff00ff"/><rect x="313" y="313" width="1" height="3" fill="#ff00ff"/><rect x="314" y="309" width="1" height="7" fill="#ff00ff"/><rect x="315" y="309" width="1" height="4" fill="#ff00ff"/><rect x="316" y="311" width="1" height="2" fill="#ff00ff"/><rect x="317" y="310" width="1" height="2" fill="#ff00ff"/><rect x="318" y="310" width="1" height="4" fill="#ff00ff"/><rect x="319" y="313" width="1" height="4" fill="#ff00ff"/><rect x="320" y="316" width="1" height="1" fill="#ff00ff"/><rect x="321" y="307" width="1" height="10" fill="#ff00ff"/><rect x="322" y="307" width="1" height="6" fill="#ff00ff"/><rect x="323" y="312" width="1" height="3" fill="#ff00ff"/><rect x="324" y="310" width="1" height="5" fill="#ff00ff"/><rect x="325" y="310" width="1" height="3" fill="#ff00ff"/><rect x="326" y="312" width="1" height="5" fill="#ff00ff"/><rect x="327" y="316" width="1" height="1" fill="#ff00ff"/><rect x="328" y="315" width="1" height="2" fill="#ff00ff"/><rect x="329" y="308" width="1" height="8" fill="#ff00ff"/><rect x="330" y="308" width="1" height="11" fill="#ff00ff"/><rect x="331" y="318" width="1" height="3" fill="#ff00ff"/><rect x="332" y="318" width="1" height="3" fill="#ff00ff"/><rect x="333" y="315" width="1" height="4" fill="#ff00ff"/><rect x="334" y="315" width="1" height="4" fill="#ff00ff"/><rect x="335" y="317" width="1" height="2" fill="#ff00ff"/><rect x="336" y="315" width="1" height="3" fill="#ff00ff"/><rect x="337" y="315" width="1" height="5" fill="#ff00ff"/><rect x="338" y="314" width="1" height="6" fill="#ff00ff"/><rect x="339" y="313" width="1" height="2" fill="#ff00ff"/><rect x="340" y="313" width="1" height="2" fill="#ff00ff"/><rect x="341" y="314" width="1" height="2" fill="#ff00ff"/><rect x="342" y="315" width="1" height="2" fill="#ff00ff"/><rect x="343" y="316" width="1" height="5" fill="#ff00ff"/><rect x="344" y="316" width="1" height="5" fill="#ff00ff"/><rect x="345" y="316" width="1" height="2" fill="#ff00ff"/><rect x="346" y="317" width="1" height="5" fill="#ff00ff"/><rect x="347" y="321" width="1" height="1" fill="#ff00ff"/><rect x="348" y="317" width="1" height="5" fill="#ff00ff"/><rect x="349" y="312" width="1" height="6" fill="#ff00ff"/><rect x="350" y="312" width="1" height="5" fill="#ff00ff"/><rect x="351" y="316" width="2" height="5" fill="#ff00ff"/><rect x="352" y="320" width="1" height="8" fill="#ff00ff"/><rect x="353" y="319" width="1" height="9" fill="#ff00ff"/><rect x="354" y="319" width="1" height="1" fill="#ff00ff"/><rect x="355" y="319" width="1" height="4" fill="#ff00ff"/><rect x="356" y="322" width="1" height="1" fill="#ff00ff"/><rect x="357" y="322" width="1" height="2" fill="#ff00ff"/><rect x="358" y="322" width="1" height="2" fill="#ff00ff"/><rect x="359" y="322" width="1" height="3" fill="#ff00ff"/><rect x="360" y="321" width="1" height="4" fill="#ff00ff"/><rect x="361" y="314" width="1" height="8" fill="#ff00ff"/><rect x="362" y="314" width="1" height="6" fill="#ff00ff"/><rect x="363" y="319" width="1" height="2" fill="#ff00ff"/><rect x="364" y="319" width="1" height="2" fill="#ff00ff"/><rect x="365" y="319" width="1" height="1" fill="#ff00ff"/><rect x="366" y="319" width="1" height="1" fill="#ff00ff"/><rect x="367" y="319" width="1" height="10" fill="#ff00ff"/><rect x="368" y="321" width="2" height="8" fill="#ff00ff"/><rect x="369" y="321" width="1" height="1" fill="#ff00ff"/><rect x="370" y="314" width="1" height="8" fill="#ff00ff"/><rect x="371" y="314" width="1" height="4" fill="#ff00ff"/><rect x="372" y="317" width="1" height="5" fill="#ff00ff"/><rect x="373" y="315" width="1" height="7" fill="#ff00ff"/><rect x="374" y="315" width="1" height="2" fill="#ff00ff"/><rect x="375" y="316" width="1" height="7" fill="#ff00ff"/><rect x="376" y="322" width="1" height="2" fill="#ff00ff"/><rect x="377" y="321" width="1" height="3" fill="#ff00ff"/><rect x="378" y="321" width="1" height="3" fill="#ff00ff"/><rect x="379" y="321" width="1" height="3" fill="#ff00ff"/><rect x="380" y="321" width="1" height="4" fill="#ff00ff"/><rect x="381" y="324" width="1" height="2" fill="#ff00ff"/><rect x="382" y="325" width="1" height="4" fill="#ff00ff"/><rect x="383" y="327" width="1" height="2" fill="#ff00ff"/><rect x="384" y="320" width="1" height="8" fill="#ff00ff"/><rect x="385" y="320" width="1" height="4" fill="#ff00ff"/><rect x="386" y="321" width="1" height="3" fill="#ff00ff"/><rect x="387" y="321" width="1" height="3" fill="#ff00ff"/><rect x="388" y="315" width="2" height="9" fill="#ff00ff"/><rect x="389" y="315" width="1" height="8" fill="#ff00ff"/><rect x="390" y="319" width="1" height="4" fill="#ff00ff"/><rect x="391" y="317" width="1" height="3" fill="#ff00ff"/><rect x="392" y="315" width="1" height="3" fill="#ff00ff"/><rect x="393" y="315" width="1" height="3" fill="#ff00ff"/><rect x="394" y="316" width="1" height="2" fill="#ff00ff"/><rect x="395" y="316" width="1" height="6" fill="#ff00ff"/><rect x="396" y="321" width="1" height="3" fill="#ff00ff"/><rect x="397" y="321" width="1" height="3" fill="#ff00ff"/><rect x="398" y="321" width="1" height="3" fill="#ff00ff"/><rect x="399" y="320" width="1" height="4" fill="#ff00ff"/><rect x="400" y="320" width="1" height="4" fill="#ff00ff"/><rect x="401" y="323" width="1" height="2" fill="#ff00ff"/><rect x="402" y="321" width="1" height="4" fill="#ff00ff"/><rect x="403" y="319" width="1" height="3" fill="#ff00ff"/><rect x="404" y="314" width="1" height="6" fill="#ff00ff"/><rect x="405" y="314" width="1" height="5" fill="#ff00ff"/><rect x="406" y="316" width="1" height="3" fill="#ff00ff"/><rect x="407" y="316" width="1" height="6" fill="#ff00ff"/><rect x="408" y="321" width="1" height="2" fill="#ff00ff"/><rect x="409" y="322" width="1" height="3" fill="#ff00ff"/><rect x="410" y="322" width="1" height="3" fill="#ff00ff"/><rect x="411" y="318" width="1" height="5" fill="#ff00ff"/><rect x="412" y="312" width="1" height="7" fill="#ff00ff"/><rect x="413" y="312" width="1" height="5" fill="#ff00ff"/><rect x="414" y="316" width="1" height="6" fill="#ff00ff"/><rect x="415" y="313" width="1" height="9" fill="#ff00ff"/><rect x="416" y="313" width="1" height="9" fill="#ff00ff"/><rect x="417" y="317" width="1" height="5" fill="#ff00ff"/><rect x="418" y="317" width="1" height="8" fill="#ff00ff"/><rect x="419" y="319" width="1" height="6" fill="#ff00ff"/><rect x="420" y="318" width="1" height="2" fill="#ff00ff"/><rect x="421" y="315" width="2" height="4" fill="#ff00ff"/><rect x="422" y="315" width="1" height="6" fill="#ff00ff"/><rect x="423" y="319" width="1" height="2" fill="#ff00ff"/><rect x="424" y="314" width="1" height="6" fill="#ff00ff"/><rect x="425" y="314" width="1" height="3" fill="#ff00ff"/><rect x="426" y="316" width="1" height="7" fill="#ff00ff"/><rect x="427" y="322" width="1" height="2" fill="#ff00ff"/><rect x="428" y="319" width="1" height="5" fill="#ff00ff"/><rect x="429" y="317" width="1" height="3" fill="#ff00ff"/><rect x="430" y="317" width="1" height="3" fill="#ff00ff"/><rect x="431" y="315" width="1" height="5" fill="#ff00ff"/><rect x="432" y="315" width="1" height="3" fill="#ff00ff"/><rect x="433" y="317" width="1" height="1" fill="#ff00ff"/><rect x="434" y="317" width="1" height="2" fill="#ff00ff"/><rect x="435" y="318" width="1" height="3" fill="#ff00ff"/><rect x="436" y="320" width="1" height="3" fill="#ff00ff"/><rect x="437" y="318" width="1" height="5" fill="#ff00ff"/><rect x="438" y="318" width="1" height="2" fill="#ff00ff"/><rect x="439" y="319" width="1" height="1" fill="#ff00ff"/><rect x="440" y="319" width="1" height="1" fill="#ff00ff"/><rect x="441" y="319" width="1" height="3" fill="#ff00ff"/><rect x="442" y="302" width="1" height="20" fill="#ff00ff"/><rect x="443" y="302" width="1" height="20" fill="#ff00ff"/><rect x="444" y="319" width="1" height="3" fill="#ff00ff"/><rect x="445" y="297" width="1" height="23" fill="#ff00ff"/><rect x="446" y="297" width="1" height="25" fill="#ff00ff"/><rect x="447" y="314" width="1" height="8" fill="#ff00ff"/><rect x="448" y="314" width="1" height="9" fill="#ff00ff"/><rect x="449" y="321" width="1" height="2" fill="#ff00ff"/><rect x="450" y="321" width="1" height="3" fill="#ff00ff"/></svg><div class="t" style="left:-258px;width:300px;top:127px;color:#000;font-size:11px;text-align:right">500</div><div class="t" style="left:-258px;width:300px;top:154px;color:#000;font-size:11px;text-align:right">400</div><div class="t" style="left:-258px;width:300px;top:180px;color:#000;font-size:11px;text-align:right">300</div><div class="t" style="left:-258px;width:300px;top:207px;color:#000;font-size:11px;text-align:right">200</div><div class="t" style="left:-258px;width:300px;top:233px;color:#000;font-size:11px;text-align:right">100</div><div class="t" style="left:471px;top:127px;color:#000;font-size:11px;font-weight:400;">16</div><div class="t" style="left:471px;top:144px;color:#000;font-size:11px;font-weight:400;">14</div><div class="t" style="left:471px;top:160px;color:#000;font-size:11px;font-weight:400;">12</div><div class="t" style="left:471px;top:177px;color:#000;font-size:11px;font-weight:400;">10</div><div class="t" style="left:471px;top:193px;color:#000;font-size:11px;font-weight:400;">8</div><div class="t" style="left:471px;top:210px;color:#000;font-size:11px;font-weight:400;">6</div><div class="t" style="left:471px;top:227px;color:#000;font-size:11px;font-weight:400;">4</div><div class="t" style="left:471px;top:243px;color:#000;font-size:11px;font-weight:400;">2</div><div class="t" style="left:-258px;width:300px;top:289px;color:#000;font-size:11px;text-align:right">20</div><div class="t" style="left:-258px;width:300px;top:316px;color:#000;font-size:11px;text-align:right">16</div><div class="t" style="left:-258px;width:300px;top:342px;color:#000;font-size:11px;text-align:right">12</div><div class="t" style="left:-258px;width:300px;top:369px;color:#000;font-size:11px;text-align:right">8</div><div class="t" style="left:-258px;width:300px;top:395px;color:#000;font-size:11px;text-align:right">4</div><div class="t" style="left:471px;top:289px;color:#000;font-size:11px;font-weight:400;">10</div><div class="t" style="left:471px;top:316px;color:#000;font-size:11px;font-weight:400;">8</div><div class="t" style="left:471px;top:342px;color:#000;font-size:11px;font-weight:400;">6</div><div class="t" style="left:471px;top:369px;color:#000;font-size:11px;font-weight:400;">4</div><div class="t" style="left:471px;top:395px;color:#000;font-size:11px;font-weight:400;">2</div><div class="t" style="left:42px;top:271px;color:#000;font-size:11px;font-weight:400;">0.0</div><div class="t" style="left:42px;top:433px;color:#000;font-size:11px;font-weight:400;">0.0</div><div class="t" style="left:88px;top:271px;color:#000;font-size:11px;font-weight:400;">0.5</div><div class="t" style="left:88px;top:433px;color:#000;font-size:11px;font-weight:400;">0.5</div><div class="t" style="left:135px;top:271px;color:#000;font-size:11px;font-weight:400;">1.0</div><div class="t" style="left:135px;top:433px;color:#000;font-size:11px;font-weight:400;">1.0</div><div class="t" style="left:181px;top:271px;color:#000;font-size:11px;font-weight:400;">1.5</div><div class="t" style="left:181px;top:433px;color:#000;font-size:11px;font-weight:400;">1.5</div><div class="t" style="left:227px;top:271px;color:#000;font-size:11px;font-weight:400;">2.0</div><div class="t" style="left:227px;top:433px;color:#000;font-size:11px;font-weight:400;">2.0</div><div class="t" style="left:274px;top:271px;color:#000;font-size:11px;font-weight:400;">2.5</div><div class="t" style="left:274px;top:433px;color:#000;font-size:11px;font-weight:400;">2.5</div><div class="t" style="left:320px;top:271px;color:#000;font-size:11px;font-weight:400;">3.0</div><div class="t" style="left:320px;top:433px;color:#000;font-size:11px;font-weight:400;">3.0</div><div class="t" style="left:367px;top:271px;color:#000;font-size:11px;font-weight:400;">3.5</div><div class="t" style="left:367px;top:433px;color:#000;font-size:11px;font-weight:400;">3.5</div><div class="t" style="left:413px;top:271px;color:#000;font-size:11px;font-weight:400;">4.0</div><div class="t" style="left:413px;top:433px;color:#000;font-size:11px;font-weight:400;">4.0</div><div class="t" style="left:460px;top:271px;color:#000;font-size:11px;font-weight:400;">4.5</div><div class="t" style="left:460px;top:433px;color:#000;font-size:11px;font-weight:400;">4.5</div><div class="a" style="left:492px;top:128px;width:139px;height:83px;border:1px solid #fff;"></div><div class="a" style="left:491px;top:127px;width:139px;height:83px;border:1px solid #808080;"></div><div class="a" style="left:498px;top:126px;width:72px;height:3px;background:#e3e3e3;"></div><div class="t" style="left:501px;top:122px;color:#000;font-size:11px;font-weight:400;">Инф. о диске</div><div class="t" style="left:500px;top:137px;color:#000;font-size:11px;font-weight:400;">Тип:</div><div class="t" style="left:545px;top:137px;color:#000080;font-size:11px;font-weight:400;">DVD-R</div><div class="t" style="left:500px;top:154px;color:#000;font-size:11px;font-weight:400;">ID:</div><div class="t" style="left:545px;top:154px;color:#000080;font-size:11px;font-weight:400;">CMC MAG. AE1</div><div class="t" style="left:500px;top:172px;color:#000;font-size:11px;font-weight:400;">Дата:</div><div class="t" style="left:545px;top:172px;color:#000080;font-size:11px;font-weight:400;">n/a</div><div class="t" style="left:500px;top:189px;color:#000;font-size:11px;font-weight:400;">Метка:</div><div class="a" style="left:492px;top:220px;width:139px;height:201px;border:1px solid #fff;"></div><div class="a" style="left:491px;top:219px;width:139px;height:201px;border:1px solid #808080;"></div><div class="a" style="left:498px;top:218px;width:59px;height:3px;background:#e3e3e3;"></div><div class="t" style="left:501px;top:214px;color:#000;font-size:11px;font-weight:400;">Установки</div><div class="t" style="left:500px;top:228px;color:#000;font-size:11px;font-weight:400;">Скорость:</div><div class="a" style="left:500px;top:243px;width:84px;height:21px;background:#ffffff;"></div><div class="a" style="left:500px;top:243px;width:83px;height:20px;background:#808080;"></div><div class="a" style="left:501px;top:244px;width:82px;height:19px;background:#e3e3e3;"></div><div class="a" style="left:501px;top:244px;width:81px;height:18px;background:#6e6e6e;"></div><div class="a" style="left:502px;top:245px;width:80px;height:17px;background:#fff;"></div><div class="t" style="left:504px;top:248px;color:#000;font-size:11px;font-weight:400;">8 X</div><div class="a" style="left:566px;top:245px;width:16px;height:17px;background:#6e6e6e;"></div><div class="a" style="left:566px;top:245px;width:15px;height:16px;background:#ffffff;"></div><div class="a" style="left:567px;top:246px;width:14px;height:15px;background:#808080;"></div><div class="a" style="left:567px;top:246px;width:13px;height:14px;background:#f0f0f0;"></div><div class="a" style="left:568px;top:247px;width:12px;height:13px;background:#e3e3e3;"></div><svg class="a" style="left:566px;top:245px" width="16" height="17" shape-rendering="crispEdges"><path d="M4 7h7l-3.5 4z" fill="#000"/></svg><div class="a" style="left:592px;top:241px;width:23px;height:23px;background:#6e6e6e;"></div><div class="a" style="left:592px;top:241px;width:22px;height:22px;background:#ffffff;"></div><div class="a" style="left:593px;top:242px;width:21px;height:21px;background:#808080;"></div><div class="a" style="left:593px;top:242px;width:20px;height:20px;background:#f0f0f0;"></div><div class="a" style="left:594px;top:243px;width:19px;height:19px;background:#e3e3e3;"></div><svg class="a" style="left:596px;top:244px" width="16" height="17">
<rect x="0.5" y="0.5" width="13" height="15" fill="#fff" stroke="#000" stroke-width="1"/>
<path d="M3.6 8.2 V5.6 Q3.6 4.6 4.6 4.6 H7.4" fill="none" stroke="#008000" stroke-width="1.3"/>
<path d="M7 2.2 L9.8 4.6 L7 7 Z" fill="#008000"/>
<path d="M10.4 8 V11.2 Q10.4 12.2 9.4 12.2 H6.8" fill="none" stroke="#008000" stroke-width="1.3"/>
<path d="M7.2 9.8 L4.4 12.2 L7.2 14.6 Z" fill="#008000"/>
</svg><div class="t" style="left:502px;top:275px;color:#000;font-size:11px;font-weight:400;">Старт:</div><div class="a" style="left:554px;top:269px;width:60px;height:20px;background:#ffffff;"></div><div class="a" style="left:554px;top:269px;width:59px;height:19px;background:#808080;"></div><div class="a" style="left:555px;top:270px;width:58px;height:18px;background:#e3e3e3;"></div><div class="a" style="left:555px;top:270px;width:57px;height:17px;background:#6e6e6e;"></div><div class="a" style="left:556px;top:271px;width:56px;height:16px;background:#fff;"></div><div class="t" style="left:557px;top:273px;color:#000;font-size:11px;font-weight:400;">0000 MB</div><div class="t" style="left:502px;top:296px;color:#000;font-size:11px;font-weight:400;">Конец:</div><div class="a" style="left:554px;top:292px;width:60px;height:20px;background:#ffffff;"></div><div class="a" style="left:554px;top:292px;width:59px;height:19px;background:#808080;"></div><div class="a" style="left:555px;top:293px;width:58px;height:18px;background:#e3e3e3;"></div><div class="a" style="left:555px;top:293px;width:57px;height:17px;background:#6e6e6e;"></div><div class="a" style="left:556px;top:294px;width:56px;height:16px;background:#fff;"></div><div class="t" style="left:557px;top:295px;color:#000;font-size:11px;font-weight:400;">4440 MB</div><div class="a" style="left:502px;top:317px;width:13px;height:13px;background:#ffffff;"></div><div class="a" style="left:502px;top:317px;width:12px;height:12px;background:#808080;"></div><div class="a" style="left:503px;top:318px;width:11px;height:11px;background:#e3e3e3;"></div><div class="a" style="left:503px;top:318px;width:10px;height:10px;background:#6e6e6e;"></div><div class="a" style="left:504px;top:319px;width:9px;height:9px;background:#fff;"></div><div class="t" style="left:521px;top:317px;color:#000;font-size:11px;font-weight:400;">Быстр.скан.</div><div class="a" style="left:502px;top:338px;width:13px;height:13px;background:#ffffff;"></div><div class="a" style="left:502px;top:338px;width:12px;height:12px;background:#808080;"></div><div class="a" style="left:503px;top:339px;width:11px;height:11px;background:#e3e3e3;"></div><div class="a" style="left:503px;top:339px;width:10px;height:10px;background:#6e6e6e;"></div><div class="a" style="left:504px;top:340px;width:9px;height:9px;background:#fff;"></div><svg class="a" style="left:502px;top:338px" width="13" height="13" shape-rendering="crispEdges"><rect x="9" y="3" width="1" height="1" fill="#000"/><rect x="8" y="4" width="2" height="1" fill="#000"/><rect x="3" y="5" width="1" height="1" fill="#000"/><rect x="7" y="5" width="3" height="1" fill="#000"/><rect x="3" y="6" width="2" height="1" fill="#000"/><rect x="6" y="6" width="3" height="1" fill="#000"/><rect x="3" y="7" width="5" height="1" fill="#000"/><rect x="4" y="8" width="3" height="1" fill="#000"/><rect x="5" y="9" width="1" height="1" fill="#000"/></svg><div class="t" style="left:521px;top:338px;color:#000;font-size:11px;font-weight:400;">Отобр. C1/PIE</div><div class="a" style="left:502px;top:355px;width:13px;height:13px;background:#ffffff;"></div><div class="a" style="left:502px;top:355px;width:12px;height:12px;background:#808080;"></div><div class="a" style="left:503px;top:356px;width:11px;height:11px;background:#e3e3e3;"></div><div class="a" style="left:503px;top:356px;width:10px;height:10px;background:#6e6e6e;"></div><div class="a" style="left:504px;top:357px;width:9px;height:9px;background:#fff;"></div><svg class="a" style="left:502px;top:355px" width="13" height="13" shape-rendering="crispEdges"><rect x="9" y="3" width="1" height="1" fill="#000"/><rect x="8" y="4" width="2" height="1" fill="#000"/><rect x="3" y="5" width="1" height="1" fill="#000"/><rect x="7" y="5" width="3" height="1" fill="#000"/><rect x="3" y="6" width="2" height="1" fill="#000"/><rect x="6" y="6" width="3" height="1" fill="#000"/><rect x="3" y="7" width="5" height="1" fill="#000"/><rect x="4" y="8" width="3" height="1" fill="#000"/><rect x="5" y="9" width="1" height="1" fill="#000"/></svg><div class="t" style="left:521px;top:355px;color:#000;font-size:11px;font-weight:400;">Отобр. C2/PIF</div><div class="a" style="left:502px;top:371px;width:13px;height:13px;background:#ffffff;"></div><div class="a" style="left:502px;top:371px;width:12px;height:12px;background:#808080;"></div><div class="a" style="left:503px;top:372px;width:11px;height:11px;background:#e3e3e3;"></div><div class="a" style="left:503px;top:372px;width:10px;height:10px;background:#6e6e6e;"></div><div class="a" style="left:504px;top:373px;width:9px;height:9px;background:#fff;"></div><svg class="a" style="left:502px;top:371px" width="13" height="13" shape-rendering="crispEdges"><rect x="9" y="3" width="1" height="1" fill="#000"/><rect x="8" y="4" width="2" height="1" fill="#000"/><rect x="3" y="5" width="1" height="1" fill="#000"/><rect x="7" y="5" width="3" height="1" fill="#000"/><rect x="3" y="6" width="2" height="1" fill="#000"/><rect x="6" y="6" width="3" height="1" fill="#000"/><rect x="3" y="7" width="5" height="1" fill="#000"/><rect x="4" y="8" width="3" height="1" fill="#000"/><rect x="5" y="9" width="1" height="1" fill="#000"/></svg><div class="t" style="left:521px;top:371px;color:#000;font-size:11px;font-weight:400;">Отобр. Jitter</div><div class="a" style="left:502px;top:387px;width:13px;height:13px;background:#ffffff;"></div><div class="a" style="left:502px;top:387px;width:12px;height:12px;background:#808080;"></div><div class="a" style="left:503px;top:388px;width:11px;height:11px;background:#e3e3e3;"></div><div class="a" style="left:503px;top:388px;width:10px;height:10px;background:#6e6e6e;"></div><div class="a" style="left:504px;top:389px;width:9px;height:9px;background:#fff;"></div><svg class="a" style="left:502px;top:387px" width="13" height="13" shape-rendering="crispEdges"><rect x="9" y="3" width="1" height="1" fill="#000"/><rect x="8" y="4" width="2" height="1" fill="#000"/><rect x="3" y="5" width="1" height="1" fill="#000"/><rect x="7" y="5" width="3" height="1" fill="#000"/><rect x="3" y="6" width="2" height="1" fill="#000"/><rect x="6" y="6" width="3" height="1" fill="#000"/><rect x="3" y="7" width="5" height="1" fill="#000"/><rect x="4" y="8" width="3" height="1" fill="#000"/><rect x="5" y="9" width="1" height="1" fill="#000"/></svg><div class="t" style="left:521px;top:387px;color:#000;font-size:11px;font-weight:400;">Отобр. скор. чтения</div><div class="a" style="left:502px;top:403px;width:13px;height:13px;background:#ffffff;"></div><div class="a" style="left:502px;top:403px;width:12px;height:12px;background:#808080;"></div><div class="a" style="left:503px;top:404px;width:11px;height:11px;background:#e3e3e3;"></div><div class="a" style="left:503px;top:404px;width:10px;height:10px;background:#6e6e6e;"></div><div class="a" style="left:504px;top:405px;width:9px;height:9px;background:#e3e3e3;"></div><svg class="a" style="left:502px;top:403px" width="13" height="13" shape-rendering="crispEdges"><rect x="9" y="3" width="1" height="1" fill="#8a8a8a"/><rect x="8" y="4" width="2" height="1" fill="#8a8a8a"/><rect x="3" y="5" width="1" height="1" fill="#8a8a8a"/><rect x="7" y="5" width="3" height="1" fill="#8a8a8a"/><rect x="3" y="6" width="2" height="1" fill="#8a8a8a"/><rect x="6" y="6" width="3" height="1" fill="#8a8a8a"/><rect x="3" y="7" width="5" height="1" fill="#8a8a8a"/><rect x="4" y="8" width="3" height="1" fill="#8a8a8a"/><rect x="5" y="9" width="1" height="1" fill="#8a8a8a"/></svg><div class="t" style="left:521px;top:403px;color:#8a8a8a;font-size:11px;font-weight:400;">Отобр. скор. записи</div><div class="a" style="left:492px;top:429px;width:139px;height:26px;border:1px solid #fff;"></div><div class="a" style="left:491px;top:428px;width:139px;height:26px;border:1px solid #808080;"></div><div class="t" style="left:502px;top:436px;color:#000;font-size:11px;font-weight:400;">Индекс</div><div class="t" style="left:320px;width:300px;top:436px;color:#000080;font-size:11px;text-align:right">79</div><div class="a" style="left:492px;top:461px;width:139px;height:56px;border:1px solid #fff;"></div><div class="a" style="left:491px;top:460px;width:139px;height:56px;border:1px solid #808080;"></div><div class="t" style="left:502px;top:470px;color:#000;font-size:11px;font-weight:400;">Выполнено:</div><div class="t" style="left:321px;width:300px;top:470px;color:#000080;font-size:11px;text-align:right">100 %</div><div class="t" style="left:502px;top:486px;color:#000;font-size:11px;font-weight:400;">Положение:</div><div class="t" style="left:321px;width:300px;top:486px;color:#000080;font-size:11px;text-align:right">4439 MB</div><div class="t" style="left:502px;top:501px;color:#000;font-size:11px;font-weight:400;">Скорость:</div><div class="t" style="left:321px;width:300px;top:501px;color:#000080;font-size:11px;text-align:right">8.27 X</div><div class="a" style="left:15px;top:461px;width:147px;height:57px;border:1px solid #fff;"></div><div class="a" style="left:14px;top:460px;width:147px;height:57px;border:1px solid #808080;"></div><div class="a" style="left:24px;top:459px;width:55px;height:3px;background:#e3e3e3;"></div><div class="a" style="left:24px;top:457px;width:8px;height:8px;background:#00ffff;border:1px solid #000;"></div><div class="t" style="left:35px;top:455px;color:#000;font-size:11px;font-weight:400;">PI Errors</div><div class="t" style="left:22px;top:471px;color:#000;font-size:11px;font-weight:400;">Среднее:</div><div class="t" style="left:-149px;width:300px;top:471px;color:#000080;font-size:11px;text-align:right">99.33</div><div class="t" style="left:22px;top:486px;color:#000;font-size:11px;font-weight:400;">Максим.:</div><div class="t" style="left:-149px;width:300px;top:486px;color:#000080;font-size:11px;text-align:right">242</div><div class="t" style="left:22px;top:500px;color:#000;font-size:11px;font-weight:400;">Итого:</div><div class="t" style="left:-149px;width:300px;top:500px;color:#000080;font-size:11px;text-align:right">1569129</div><div class="a" style="left:173px;top:461px;width:146px;height:57px;border:1px solid #fff;"></div><div class="a" style="left:172px;top:460px;width:146px;height:57px;border:1px solid #808080;"></div><div class="a" style="left:182px;top:459px;width:65px;height:3px;background:#e3e3e3;"></div><div class="a" style="left:182px;top:457px;width:8px;height:8px;background:#ffff00;border:1px solid #000;"></div><div class="t" style="left:193px;top:455px;color:#000;font-size:11px;font-weight:400;">PI Failures</div><div class="t" style="left:180px;top:471px;color:#000;font-size:11px;font-weight:400;">Среднее:</div><div class="t" style="left:9px;width:300px;top:471px;color:#000080;font-size:11px;text-align:right">0.51</div><div class="t" style="left:180px;top:486px;color:#000;font-size:11px;font-weight:400;">Максим.:</div><div class="t" style="left:9px;width:300px;top:486px;color:#000080;font-size:11px;text-align:right">20</div><div class="t" style="left:180px;top:500px;color:#000;font-size:11px;font-weight:400;">Итого:</div><div class="t" style="left:9px;width:300px;top:500px;color:#000080;font-size:11px;text-align:right">6578</div><div class="a" style="left:332px;top:461px;width:147px;height:43px;border:1px solid #fff;"></div><div class="a" style="left:331px;top:460px;width:147px;height:43px;border:1px solid #808080;"></div><div class="a" style="left:341px;top:459px;width:39px;height:3px;background:#e3e3e3;"></div><div class="a" style="left:341px;top:457px;width:8px;height:8px;background:#ff00ff;border:1px solid #000;"></div><div class="t" style="left:352px;top:455px;color:#000;font-size:11px;font-weight:400;">Jitter</div><div class="t" style="left:339px;top:471px;color:#000;font-size:11px;font-weight:400;">Среднее:</div><div class="t" style="left:168px;width:300px;top:471px;color:#000080;font-size:11px;text-align:right">8.10 %</div><div class="t" style="left:339px;top:486px;color:#000;font-size:11px;font-weight:400;">Максим.:</div><div class="t" style="left:168px;width:300px;top:486px;color:#000080;font-size:11px;text-align:right">9.9 %</div><div class="t" style="left:340px;top:504px;color:#000;font-size:11px;font-weight:400;">Сбои PO:</div><div class="t" style="left:168px;width:300px;top:504px;color:#000080;font-size:11px;text-align:right">0</div></body></html>
